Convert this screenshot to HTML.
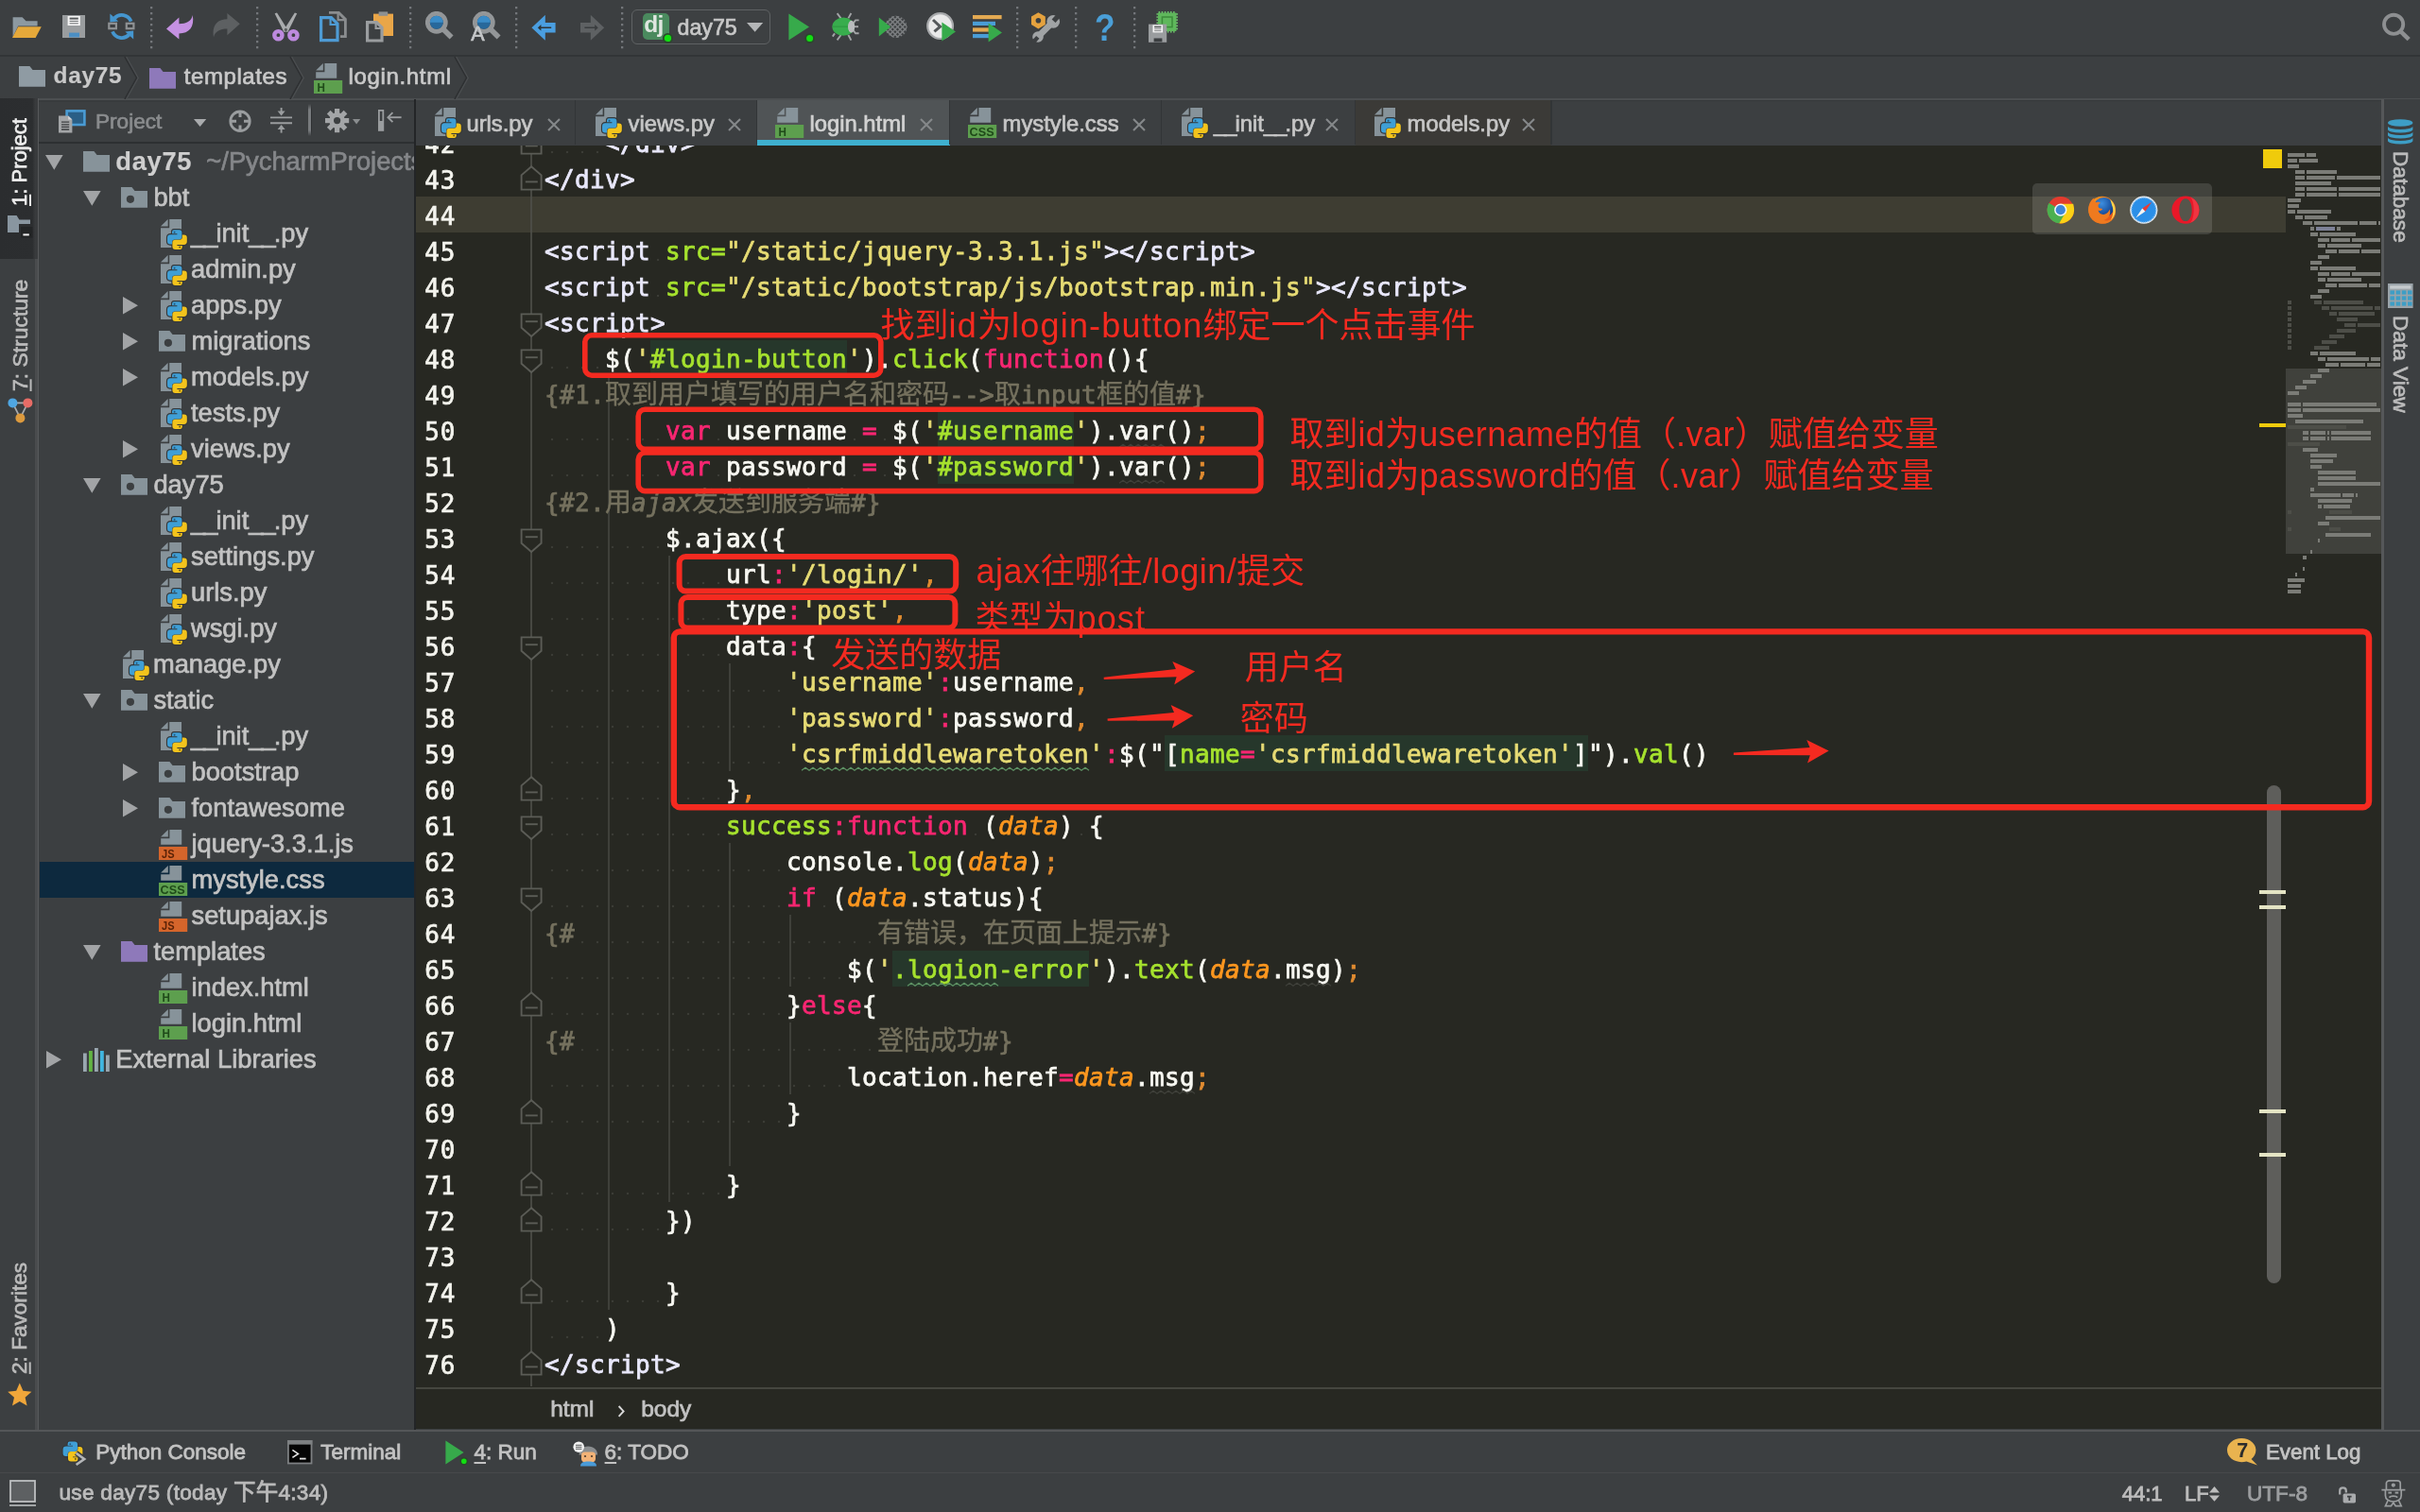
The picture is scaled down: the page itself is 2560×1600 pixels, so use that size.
<!DOCTYPE html>
<html lang="zh"><head><meta charset="utf-8"><title>day75 - login.html - PyCharm</title>
<style>
html,body{margin:0;padding:0}
body{width:2560px;height:1600px;overflow:hidden;position:relative;background:#3c3f41;
 font-family:"Liberation Sans","Noto Sans CJK SC",sans-serif;color:#bbb;-webkit-font-smoothing:antialiased;-webkit-text-stroke:.7px}
#wrap{position:absolute;left:0;top:0;width:2560px;height:1600px;overflow:hidden;will-change:transform}
#wrap>div,#wrap>svg{position:absolute}
#editor{position:absolute;left:440px;top:153px;width:2079px;height:1359px;background:#272822;overflow:hidden}
#editor div,#editor svg{position:absolute}
.ln{left:9.2px;width:40px;font-family:"DejaVu Sans Mono","Liberation Mono",monospace;font-size:26px;letter-spacing:1px;-webkit-text-stroke:.7px;
 line-height:38px;height:38px;color:#f4f4ee;white-space:pre}
.cl{left:136px;font-family:"DejaVu Sans Mono","Liberation Mono","Noto Sans CJK SC",monospace;font-size:26px;letter-spacing:.347px;
 line-height:38px;height:38px;color:#f8f8f2;white-space:pre;-webkit-text-stroke:.75px}
.cl span{position:relative}
.cj{font-family:"Noto Sans CJK SC","WenQuanYi Zen Hei",sans-serif;letter-spacing:0;font-size:28px;line-height:10px;-webkit-text-stroke:.35px}
b{-webkit-text-stroke:.15px}
.us{letter-spacing:-2px}
.bb{-webkit-text-stroke:.8px}
.al{letter-spacing:1.2px}
.t{color:#e9e8fb}.g{color:#a6e22e}.y{color:#e6db74}.p{color:#f92672}.o{color:#e08b30}.c{color:#75715e}
.d{color:#fd971f;font-style:italic}
.i{font-style:italic}
.ws{height:38px;background-image:radial-gradient(circle at 8px 29px,#3b3c36 0,#3b3c36 1px,rgba(59,60,54,0) 1.6px);background-size:16px 38px}
.bg{background:#26372b;height:38px}
.ig{width:2px;background:#3f403a}
.ann{font-family:"Liberation Sans","Noto Sans CJK SC",sans-serif;color:#f42a20;white-space:pre;-webkit-text-stroke:0}
.row{position:absolute;left:42px;width:396px;height:38px}
#tree div,#tree svg{position:absolute}
.tt{font-size:27.3px;line-height:38px;height:38px;color:#c3c3c3;white-space:pre;top:-0.5px}
</style></head><body><div id="wrap">

<div style="left:0;top:0;width:2560px;height:58px;background:#3c3f41"></div>
<div style="left:0;top:58px;width:2560px;height:1.5px;background:#323537"></div>
<svg style="position:absolute;left:13.4px;top:17.6px" width="32" height="24" viewBox="0 0 32 24" ><path d="M.6 21V.3H10.6L14.5 4.2H26.6V9.6H6.2Z" fill="#8d99a1"/><path d="M6.2 10.3H30.8L24.6 22H0Z" fill="#e6a93a"/></svg><svg style="position:absolute;left:65.6px;top:15.8px" width="25" height="25" viewBox="0 0 25 25" ><path d="M0 0H24V24H0Z" fill="#9a9d9f"/><rect x="5.6" y="1" width="13.2" height="10" fill="#f4f4f4"/><path d="M7.6 3.6H16.8" stroke="#55585a" stroke-width="2"/><path d="M7.6 6.4H16.8M7.6 8.8H16.8" stroke="#6a6d6f" stroke-width="1"/><rect x="7" y="18.6" width="11" height="4.8" fill="#4b8fc4"/></svg><svg style="position:absolute;left:113.6px;top:13.4px" width="30" height="30" viewBox="0 0 30 30" ><g transform="translate(29.6 0) scale(-1 1)"><g fill="none" stroke="#4596cf" stroke-width="3.8"><path d="M5 9.6A10.6 10.6 0 0 1 22.6 6.4"/><path d="M24.6 20.4A10.6 10.6 0 0 1 7 23.6"/></g><path d="M18.4 9.6L27.2 1.6V10.6Z" fill="#4596cf"/><path d="M11.2 20.4L2.4 28.4V19.4Z" fill="#4596cf"/></g><g fill="#3c3f41" stroke="#8f9294" stroke-width="2.2"><rect x="1.3" y="11.8" width="7.6" height="5.4"/><rect x="19.8" y="11.8" width="7.6" height="5.4"/></g></svg><svg style="position:absolute;left:159.1px;top:6.9px" width="3" height="46" viewBox="0 0 3 46" ><rect x="0" y="0" width="2.3" height="2.3" fill="#73767a"/><rect x="0" y="6" width="2.3" height="2.3" fill="#73767a"/><rect x="0" y="12" width="2.3" height="2.3" fill="#73767a"/><rect x="0" y="18" width="2.3" height="2.3" fill="#73767a"/><rect x="0" y="24" width="2.3" height="2.3" fill="#73767a"/><rect x="0" y="30" width="2.3" height="2.3" fill="#73767a"/><rect x="0" y="36" width="2.3" height="2.3" fill="#73767a"/><rect x="0" y="42" width="2.3" height="2.3" fill="#73767a"/></svg><svg style="position:absolute;left:176.2px;top:15.6px" width="30" height="27" viewBox="0 0 30 27" ><path d="M0 14.4L13.4 2.4V9.2C21 9.2 26.6 6.6 27.8 0C30 12.6 24 19.4 13.4 19.4V25.6Z" fill="#c591e2"/></svg><svg style="position:absolute;left:224.8px;top:14.4px" width="30" height="27" viewBox="0 0 30 27" ><g transform="rotate(180 14.4 12.8)"><path d="M0 14.4L13.4 2.4V9.2C21 9.2 26.6 6.6 27.8 0C30 12.6 24 19.4 13.4 19.4V25.6Z" fill="#5d6062"/></g></svg><svg style="position:absolute;left:270.7px;top:6.9px" width="3" height="46" viewBox="0 0 3 46" ><rect x="0" y="0" width="2.3" height="2.3" fill="#73767a"/><rect x="0" y="6" width="2.3" height="2.3" fill="#73767a"/><rect x="0" y="12" width="2.3" height="2.3" fill="#73767a"/><rect x="0" y="18" width="2.3" height="2.3" fill="#73767a"/><rect x="0" y="24" width="2.3" height="2.3" fill="#73767a"/><rect x="0" y="30" width="2.3" height="2.3" fill="#73767a"/><rect x="0" y="36" width="2.3" height="2.3" fill="#73767a"/><rect x="0" y="42" width="2.3" height="2.3" fill="#73767a"/></svg><svg style="position:absolute;left:287.6px;top:12.6px" width="30" height="31" viewBox="0 0 30 31" ><path d="M2.6 1.2L5 .6L17 19.6L12.4 21Z" fill="#a9abad"/><path d="M26.2 1.2L23.8 .6L11.8 19.6L16.4 21Z" fill="#a9abad"/><circle cx="14.4" cy="18.4" r="1.6" fill="#5a5d5f"/><circle cx="6.4" cy="24.2" r="4.1" fill="none" stroke="#bd8ade" stroke-width="4.4"/><circle cx="22.4" cy="24.2" r="4.1" fill="none" stroke="#bd8ade" stroke-width="4.4"/></svg><svg style="position:absolute;left:337.6px;top:11.8px" width="30" height="33" viewBox="0 0 30 33" ><path d="M10 1.4H20.4L27.4 8.4V26.6H22" fill="none" stroke="#8a8d8f" stroke-width="2.8"/><path d="M19.6 1.6V9.2H27" fill="none" stroke="#8a8d8f" stroke-width="2.2"/><path d="M1.6 6.6H12.4L19 13.2V30.6H1.6Z" fill="#3c3f41" stroke="#4e9bd4" stroke-width="3.2"/><path d="M11.6 7V14H18.6" fill="none" stroke="#4e9bd4" stroke-width="2.2"/></svg><svg style="position:absolute;left:387.4px;top:11.6px" width="30" height="33" viewBox="0 0 30 33" ><rect x="8" y="2.6" width="21" height="23.4" fill="#e9a648"/><rect x="13.6" y=".4" width="9.6" height="4.4" fill="#8d9092"/><path d="M1.6 11.6H11.4L17 17.2V31H1.6Z" fill="#3c3f41" stroke="#9a9d9f" stroke-width="3.2"/><path d="M10.6 12V18H16.6" fill="none" stroke="#9a9d9f" stroke-width="2.2"/></svg><svg style="position:absolute;left:433.1px;top:6.9px" width="3" height="46" viewBox="0 0 3 46" ><rect x="0" y="0" width="2.3" height="2.3" fill="#73767a"/><rect x="0" y="6" width="2.3" height="2.3" fill="#73767a"/><rect x="0" y="12" width="2.3" height="2.3" fill="#73767a"/><rect x="0" y="18" width="2.3" height="2.3" fill="#73767a"/><rect x="0" y="24" width="2.3" height="2.3" fill="#73767a"/><rect x="0" y="30" width="2.3" height="2.3" fill="#73767a"/><rect x="0" y="36" width="2.3" height="2.3" fill="#73767a"/><rect x="0" y="42" width="2.3" height="2.3" fill="#73767a"/></svg><svg style="position:absolute;left:450.0px;top:12.0px" width="31" height="31" viewBox="0 0 31 31" ><circle cx="11.8" cy="11.8" r="9.4" fill="none" stroke="#939698" stroke-width="5"/><circle cx="11.8" cy="11.8" r="7" fill="#27689b"/><path d="M4.8 11.8A7 7 0 0 1 18.8 11.8Z" fill="#3a8cc8"/><path d="M19 19L27.6 27.6" stroke="#939698" stroke-width="5.6" stroke-linecap="butt"/></svg><svg style="position:absolute;left:499.6px;top:12.0px" width="31" height="31" viewBox="0 0 31 31" ><circle cx="11.8" cy="11.8" r="9.4" fill="none" stroke="#939698" stroke-width="5"/><circle cx="11.8" cy="11.8" r="7" fill="#27689b"/><path d="M4.8 11.8A7 7 0 0 1 18.8 11.8Z" fill="#3a8cc8"/><path d="M19 19L27.6 27.6" stroke="#939698" stroke-width="5.6" stroke-linecap="butt"/></svg><div style="position:absolute;left:498.2px;top:25.2px;font:21.5px/22px 'Liberation Sans',sans-serif;color:#c4c6c8">A</div><svg style="position:absolute;left:545.1px;top:6.9px" width="3" height="46" viewBox="0 0 3 46" ><rect x="0" y="0" width="2.3" height="2.3" fill="#73767a"/><rect x="0" y="6" width="2.3" height="2.3" fill="#73767a"/><rect x="0" y="12" width="2.3" height="2.3" fill="#73767a"/><rect x="0" y="18" width="2.3" height="2.3" fill="#73767a"/><rect x="0" y="24" width="2.3" height="2.3" fill="#73767a"/><rect x="0" y="30" width="2.3" height="2.3" fill="#73767a"/><rect x="0" y="36" width="2.3" height="2.3" fill="#73767a"/><rect x="0" y="42" width="2.3" height="2.3" fill="#73767a"/></svg><svg style="position:absolute;left:562.2px;top:15.8px" width="28" height="27" viewBox="0 0 28 27" ><path d="M3.6 13.3L12.6 4.9V10.3H23.4V16.3H12.6V21.7Z" fill="#2f3436" stroke="#4a9ee0" stroke-width="4.4" stroke-linejoin="miter"/></svg><svg style="position:absolute;left:612.8px;top:15.8px" width="28" height="27" viewBox="0 0 28 27" ><g transform="translate(26.6 0) scale(-1 1)"><path d="M3.6 13.3L12.6 4.9V10.3H23.4V16.3H12.6V21.7Z" fill="#3a3d3f" stroke="#5e6163" stroke-width="4.4"/></g></svg><svg style="position:absolute;left:657.1px;top:6.9px" width="3" height="46" viewBox="0 0 3 46" ><rect x="0" y="0" width="2.3" height="2.3" fill="#73767a"/><rect x="0" y="6" width="2.3" height="2.3" fill="#73767a"/><rect x="0" y="12" width="2.3" height="2.3" fill="#73767a"/><rect x="0" y="18" width="2.3" height="2.3" fill="#73767a"/><rect x="0" y="24" width="2.3" height="2.3" fill="#73767a"/><rect x="0" y="30" width="2.3" height="2.3" fill="#73767a"/><rect x="0" y="36" width="2.3" height="2.3" fill="#73767a"/><rect x="0" y="42" width="2.3" height="2.3" fill="#73767a"/></svg><div style="position:absolute;left:667.6px;top:10px;width:145.6px;height:35.4px;border:1.8px solid #5f6264;border-radius:6px;background:#3d4042"></div><div style="position:absolute;left:679.6px;top:14px;width:28.4px;height:28px;border-radius:5px;background:#4a8a5e"></div><div style="position:absolute;left:681.2px;top:12.4px;font:bold 24.5px/28px 'Liberation Sans',sans-serif;color:#dfe6e0;letter-spacing:-.6px;-webkit-text-stroke:0">dj</div><svg style="position:absolute;left:700.4px;top:34.2px" width="13" height="13" viewBox="0 0 13 13" ><circle cx="6.4" cy="6.4" r="4.6" fill="#12df12" stroke="#2a4a2c" stroke-width="1.8"/></svg><svg style="position:absolute;left:790.0px;top:24.2px" width="18" height="10" viewBox="0 0 18 10" ><path d="M0 0H17.2L8.6 9.8Z" fill="#b4b6b8"/></svg><svg style="position:absolute;left:833.6px;top:14.0px" width="30" height="33" viewBox="0 0 30 33" ><path d="M.4 .4V28.4L22 14.4Z" fill="#37aa4b"/><circle cx="22.6" cy="26.6" r="4.4" fill="#12df12" stroke="#2a4a2c" stroke-width="1.8"/></svg><svg style="position:absolute;left:879.6px;top:12.6px" width="30" height="31" viewBox="0 0 30 31" ><g fill="none" stroke="#a3a5a7" stroke-width="1.9"><path d="M9.6 6.4L5.6 1.2"/><path d="M17.4 6.4L20.4 1"/><path d="M9.6 24L5.6 29.4"/><path d="M17.4 24L20.4 29.6"/><path d="M22.6 11.6L25 8.4H28.6"/><path d="M22.6 19L25 22.2H28.6"/><path d="M23 15.2H28"/><path d="M3 22.4L.8 25.6"/></g><ellipse cx="12.2" cy="15.2" rx="11.8" ry="9.6" fill="#38ad4d"/><path d="M.4 15.2H22" stroke="#2f9a42" stroke-width="1.2"/><ellipse cx="20.6" cy="15.2" rx="3.6" ry="6.4" fill="#b9bbbd"/></svg><svg style="position:absolute;left:929.2px;top:12.8px" width="31" height="31" viewBox="0 0 31 31" ><defs><clipPath id="cvc"><circle cx="18.8" cy="15.4" r="11.6"/></clipPath></defs><g clip-path="url(#cvc)" stroke="#7b7e80" stroke-width="1.5" fill="none"><path d="M-24.0 34L10.0 0"/><path d="M-24.0 -3L10.0 31"/><path d="M-18.8 34L15.2 0"/><path d="M-18.8 -3L15.2 31"/><path d="M-13.6 34L20.4 0"/><path d="M-13.6 -3L20.4 31"/><path d="M-8.399999999999999 34L25.6 0"/><path d="M-8.399999999999999 -3L25.6 31"/><path d="M-3.1999999999999993 34L30.8 0"/><path d="M-3.1999999999999993 -3L30.8 31"/><path d="M2.0 34L36.0 0"/><path d="M2.0 -3L36.0 31"/><path d="M7.200000000000003 34L41.2 0"/><path d="M7.200000000000003 -3L41.2 31"/><path d="M12.399999999999999 34L46.4 0"/><path d="M12.399999999999999 -3L46.4 31"/><path d="M17.6 34L51.6 0"/><path d="M17.6 -3L51.6 31"/><path d="M22.800000000000004 34L56.800000000000004 0"/><path d="M22.800000000000004 -3L56.800000000000004 31"/><path d="M28.0 34L62.0 0"/><path d="M28.0 -3L62.0 31"/><path d="M33.2 34L67.2 0"/><path d="M33.2 -3L67.2 31"/></g><path d="M.8 5.4V25.4L13.2 15.4Z" fill="#37aa4b"/></svg><svg style="position:absolute;left:979.8px;top:13.4px" width="32" height="31" viewBox="0 0 32 31" ><circle cx="14.6" cy="14.6" r="13.4" fill="#e9e9e9" stroke="#a7a9ab" stroke-width="2.2"/><path d="M7 8L14.6 15.2L8.4 20.4" fill="none" stroke="#55585a" stroke-width="3"/><path d="M16.4 10.6V30.4L31 20.4Z" fill="#37aa4b"/></svg><svg style="position:absolute;left:1029.4px;top:15.6px" width="32" height="29" viewBox="0 0 32 29" ><rect x="0" y="0" width="30.6" height="4.2" fill="#e3a952"/><rect x="0" y="6.8" width="24" height="4.2" fill="#4a9dd6"/><rect x="0" y="13.4" width="18" height="4.2" fill="#e3a952"/><rect x="0" y="20" width="18" height="4.2" fill="#4a9dd6"/><path d="M16.6 8.6V28.6L31 18.6Z" fill="#37aa4b"/></svg><svg style="position:absolute;left:1074.9px;top:6.9px" width="3" height="46" viewBox="0 0 3 46" ><rect x="0" y="0" width="2.3" height="2.3" fill="#73767a"/><rect x="0" y="6" width="2.3" height="2.3" fill="#73767a"/><rect x="0" y="12" width="2.3" height="2.3" fill="#73767a"/><rect x="0" y="18" width="2.3" height="2.3" fill="#73767a"/><rect x="0" y="24" width="2.3" height="2.3" fill="#73767a"/><rect x="0" y="30" width="2.3" height="2.3" fill="#73767a"/><rect x="0" y="36" width="2.3" height="2.3" fill="#73767a"/><rect x="0" y="42" width="2.3" height="2.3" fill="#73767a"/></svg><svg style="position:absolute;left:1090.0px;top:12.6px" width="32" height="32" viewBox="0 0 32 32" ><path d="M8.6 25.4L23.6 10.4" stroke="#a0a3a5" stroke-width="6.6"/><circle cx="24.2" cy="9.8" r="6.9" fill="#a0a3a5"/><rect x="-2.6" y="-9" width="5.2" height="9" fill="#3c3f41" transform="translate(24.6 9.2) rotate(42)"/><circle cx="8" cy="26" r="5.8" fill="#a0a3a5"/><rect x="-2.2" y="0" width="4.4" height="8" fill="#3c3f41" transform="translate(7.8 26.4) rotate(42)"/><path d="M8.4 .2L15.8 4.5V13.1L8.4 17.4L1 13.1V4.5Z" fill="#e5a23e"/><circle cx="8.4" cy="8.8" r="2.8" fill="#3c3f41"/></svg><svg style="position:absolute;left:1136.7px;top:6.9px" width="3" height="46" viewBox="0 0 3 46" ><rect x="0" y="0" width="2.3" height="2.3" fill="#73767a"/><rect x="0" y="6" width="2.3" height="2.3" fill="#73767a"/><rect x="0" y="12" width="2.3" height="2.3" fill="#73767a"/><rect x="0" y="18" width="2.3" height="2.3" fill="#73767a"/><rect x="0" y="24" width="2.3" height="2.3" fill="#73767a"/><rect x="0" y="30" width="2.3" height="2.3" fill="#73767a"/><rect x="0" y="36" width="2.3" height="2.3" fill="#73767a"/><rect x="0" y="42" width="2.3" height="2.3" fill="#73767a"/></svg><div style="position:absolute;left:1158.2px;top:7.4px;font:bold 41px/44px 'Liberation Sans',sans-serif;color:#4a9fd8;-webkit-text-stroke:0;transform:scaleX(.86);transform-origin:0 0">?</div><svg style="position:absolute;left:1198.9px;top:6.9px" width="3" height="46" viewBox="0 0 3 46" ><rect x="0" y="0" width="2.3" height="2.3" fill="#73767a"/><rect x="0" y="6" width="2.3" height="2.3" fill="#73767a"/><rect x="0" y="12" width="2.3" height="2.3" fill="#73767a"/><rect x="0" y="18" width="2.3" height="2.3" fill="#73767a"/><rect x="0" y="24" width="2.3" height="2.3" fill="#73767a"/><rect x="0" y="30" width="2.3" height="2.3" fill="#73767a"/><rect x="0" y="36" width="2.3" height="2.3" fill="#73767a"/><rect x="0" y="42" width="2.3" height="2.3" fill="#73767a"/></svg><svg style="position:absolute;left:1214.8px;top:11.6px" width="32" height="33" viewBox="0 0 32 33" ><rect x="10.6" y="0" width="1.5" height="22.6" fill="#6cbf6a"/><rect x="8.4" y="2.2" width="22.6" height="1.5" fill="#6cbf6a"/><rect x="13.7" y="0" width="1.5" height="22.6" fill="#6cbf6a"/><rect x="8.4" y="5.300000000000001" width="22.6" height="1.5" fill="#6cbf6a"/><rect x="16.8" y="0" width="1.5" height="22.6" fill="#6cbf6a"/><rect x="8.4" y="8.4" width="22.6" height="1.5" fill="#6cbf6a"/><rect x="19.9" y="0" width="1.5" height="22.6" fill="#6cbf6a"/><rect x="8.4" y="11.5" width="22.6" height="1.5" fill="#6cbf6a"/><rect x="23.0" y="0" width="1.5" height="22.6" fill="#6cbf6a"/><rect x="8.4" y="14.600000000000001" width="22.6" height="1.5" fill="#6cbf6a"/><rect x="26.1" y="0" width="1.5" height="22.6" fill="#6cbf6a"/><rect x="8.4" y="17.7" width="22.6" height="1.5" fill="#6cbf6a"/><rect x="10" y="1.6" width="19.4" height="19.4" fill="#5fb75c"/><rect x="14.4" y="6" width="10.6" height="10.6" fill="none" stroke="#3c8a3a" stroke-width="1.5"/><g transform="translate(0 13.6) scale(.8)"><path d="M0 0H24V24H0Z" fill="#9a9d9f"/><rect x="5.6" y="1" width="13.2" height="10" fill="#f4f4f4"/><path d="M7.6 3.6H16.8" stroke="#55585a" stroke-width="2"/><path d="M7.6 6.4H16.8M7.6 8.8H16.8" stroke="#6a6d6f" stroke-width="1"/><rect x="7" y="18.6" width="11" height="4.8" fill="#3c3f41"/></g></svg><svg style="position:absolute;left:2518.0px;top:12.0px" width="34" height="34" viewBox="0 0 34 34" ><circle cx="14.1" cy="13.8" r="10.1" fill="none" stroke="#8d8f91" stroke-width="3.9"/><path d="M21.4 21.2L30.2 29.6" stroke="#8d8f91" stroke-width="4.6"/></svg>
<div style="position:absolute;left:716.5px;top:14.2px;font-size:23.2px;line-height:30px;color:#c8c8c8;font-weight:normal;white-space:pre;">day75</div>
<div style="left:41px;top:104px;width:2519px;height:2px;background:#4b4e50"></div>
<svg style="position:absolute;left:20.0px;top:70.2px" width="29" height="23" viewBox="0 0 29 23" ><path d="M0 0H11.4L14.6 3.9H28V21.8H0Z" fill="#8f9ba3"/></svg><svg style="position:absolute;left:157.8px;top:71.6px" width="29" height="23" viewBox="0 0 29 23" ><path d="M0 0H11.4L14.6 3.9H28V21.8H0Z" fill="#8e79ba"/></svg><svg style="position:absolute;left:331.1px;top:65.6px" width="33" height="36" viewBox="0 0 33 36" ><g transform="translate(3.2 1)"><path d="M0 7.6L7.6 0V7.6Z" fill="#87939a"/><path d="M9.2 0H22V15.8H0V9.2H9.2Z" fill="#87939a"/></g><rect x="1" y="19" width="30.2" height="14" fill="#5d9f4e"/><text x="4.4" y="31.3" font-family="Liberation Sans, sans-serif" font-weight="bold" font-size="12.6" fill="#1f4a19" textLength="8.4" lengthAdjust="spacingAndGlyphs">H</text></svg><svg style="position:absolute;left:130.2px;top:59.5px" width="18" height="45" viewBox="0 0 18 45" ><path d="M2 0L14.6 22.4L2 45" fill="none" stroke="#2e3032" stroke-width="1.6"/><path d="M3.6 0L16.2 22.4L3.6 45" fill="none" stroke="#4b4e50" stroke-width="1.3"/></svg><svg style="position:absolute;left:304.6px;top:59.5px" width="18" height="45" viewBox="0 0 18 45" ><path d="M2 0L14.6 22.4L2 45" fill="none" stroke="#2e3032" stroke-width="1.6"/><path d="M3.6 0L16.2 22.4L3.6 45" fill="none" stroke="#4b4e50" stroke-width="1.3"/></svg><svg style="position:absolute;left:478.7px;top:59.5px" width="18" height="45" viewBox="0 0 18 45" ><path d="M2 0L14.6 22.4L2 45" fill="none" stroke="#2e3032" stroke-width="1.6"/><path d="M3.6 0L16.2 22.4L3.6 45" fill="none" stroke="#4b4e50" stroke-width="1.3"/></svg>
<div style="position:absolute;left:56.5px;top:64.4px;font-size:24.4px;line-height:32px;color:#c9c9c9;font-weight:bold;white-space:pre;letter-spacing:.75px;-webkit-text-stroke:.15px">day75</div>
<div style="position:absolute;left:194.7px;top:65.1px;font-size:24px;line-height:31px;color:#c9c9c9;font-weight:normal;white-space:pre;letter-spacing:.6px">templates</div>
<div style="position:absolute;left:368.6px;top:65.1px;font-size:24px;line-height:31px;color:#c9c9c9;font-weight:normal;white-space:pre;letter-spacing:.65px">login.html</div>
<div style="left:0;top:105px;width:37px;height:1408px;background:#3c3f41"></div>
<div style="left:0;top:103.5px;width:39.8px;height:170px;background:linear-gradient(90deg,#2b2d2f 0,#2c2e30 86%,#393b3d 93%,#393b3d 100%)"></div>
<div style="left:37px;top:274px;width:3px;height:1239px;background:#4a4c4e"></div>
<div style="left:39.8px;top:104px;width:1.5px;height:1409px;background:#57595b"></div>
<div style="left:21px;top:218.2px;width:0;height:0"><div style="position:absolute;left:0;top:0;transform-origin:0 0;transform:rotate(-90deg) translate(0,-50%);font-size:22.0px;line-height:22.0px;height:22.0px;white-space:pre;color:#ededed"><span style="text-decoration:underline;text-underline-offset:2.5px;text-decoration-thickness:1.8px">1</span>: Project</div></div>
<div style="left:21px;top:413.6px;width:0;height:0"><div style="position:absolute;left:0;top:0;transform-origin:0 0;transform:rotate(-90deg) translate(0,-50%);font-size:22.9px;line-height:22.9px;height:22.9px;white-space:pre;color:#bbbbbb"><span style="text-decoration:underline;text-underline-offset:2.5px;text-decoration-thickness:1.8px">7</span>: Structure</div></div>
<div style="left:21px;top:1453.6px;width:0;height:0"><div style="position:absolute;left:0;top:0;transform-origin:0 0;transform:rotate(-90deg) translate(0,-50%);font-size:22.6px;line-height:22.6px;height:22.6px;white-space:pre;color:#bbbbbb"><span style="text-decoration:underline;text-underline-offset:2.5px;text-decoration-thickness:1.8px">2</span>: Favorites</div></div>
<svg style="position:absolute;left:8.0px;top:228.0px" width="27" height="24" viewBox="0 0 27 24" ><path d="M0 0H9.6L12.4 4.4H24V9H12V18H0Z" fill="#8996a0"/><rect x="14" y="12" width="12.4" height="11.6" fill="#232526"/><rect x="16.4" y="19.4" width="6.4" height="2" fill="#f2f2f2"/></svg><svg style="position:absolute;left:8.0px;top:421.4px" width="27" height="27" viewBox="0 0 27 27" ><g stroke="#a9abad" stroke-width="1.8"><path d="M5.4 5.4H21.4"/><path d="M5.4 5.4L13.4 21.4"/><path d="M21.4 5.4L13.4 21.4"/></g><circle cx="5.4" cy="5.4" r="5" fill="#4fa6e2"/><circle cx="21.4" cy="5.4" r="5" fill="#e76c66"/><circle cx="13.4" cy="21.4" r="5" fill="#dc9a3e"/></svg><svg style="position:absolute;left:7.6px;top:1462.6px" width="26" height="26" viewBox="0 0 26 26" ><path d="M12.8 .4L16.4 8.8L25.4 9.7L18.6 15.7L20.6 24.6L12.8 20L5 24.6L7 15.7L.2 9.7L9.2 8.8Z" fill="#f0a63a"/></svg>
<div id="tree" style="left:41px;top:105px;width:397px;height:1408px;background:#3c3f41;overflow:hidden">
<div style="left:0;top:0;width:397px;height:1px;background:#4d5052"></div><div style="left:0;top:1px;width:397px;height:2.2px;background:#383b3d"></div>
<div style="left:0;top:45px;width:397px;height:2.2px;background:#2d3032"></div>
<svg style="position:absolute;left:20.8px;top:10.6px" width="29" height="25" viewBox="0 0 29 25" ><rect x="8.6" y="1.4" width="18.8" height="14.6" fill="#2a5f86" stroke="#4a9cd4" stroke-width="2.6"/><path d="M0 6.4H10L14.4 10.8V24.4H0Z" fill="#a3a5a7"/><path d="M10.2 6.4V10.6H14.4Z" fill="#d3d5d7"/><path d="M3 13.2H11.2M3 15.8H11.2M3 18.4H11.2M3 21H11.2" stroke="#3c3f41" stroke-width="1.3"/></svg><svg style="position:absolute;left:164.2px;top:20.8px" width="14" height="9" viewBox="0 0 14 9" ><path d="M0 0H13.2L6.6 8Z" fill="#a9abad"/></svg><svg style="position:absolute;left:201.4px;top:10.6px" width="25" height="25" viewBox="0 0 25 25" ><circle cx="12" cy="12.2" r="10.2" fill="none" stroke="#9a9d9f" stroke-width="2.8"/><path d="M12 1V8M12 16.4V23.4M1 12.2H8M16 12.2H23" stroke="#9a9d9f" stroke-width="3"/></svg><svg style="position:absolute;left:244.6px;top:9.4px" width="24" height="27" viewBox="0 0 24 27" ><g stroke="#9a9d9f" stroke-width="1.9" fill="none"><path d="M0 10.4H23M0 16.2H23"/><path d="M11.6 0V7"/><path d="M11.6 26.6V19.6"/></g><path d="M7.6 3.6H15.6L11.6 8.6Z" fill="#9a9d9f"/><path d="M7.6 23H15.6L11.6 18Z" fill="#9a9d9f"/></svg><div style="left:285.4px;top:5px;width:2.6px;height:34px;background:linear-gradient(180deg,rgba(120,123,126,0),#787b7e 18%,#787b7e 82%,rgba(120,123,126,0))"></div><div style="left:288px;top:5px;width:1.4px;height:34px;background:linear-gradient(180deg,rgba(46,48,50,0),#2e3032 18%,#2e3032 82%,rgba(46,48,50,0))"></div><svg style="position:absolute;left:303.0px;top:10.4px" width="26" height="26" viewBox="0 0 26 26" ><g transform="translate(12.6 12.6)" fill="#a3a5a7"><rect x="-2.6" y="-12.6" width="5.2" height="6" transform="rotate(0)"/><rect x="-2.6" y="-12.6" width="5.2" height="6" transform="rotate(45)"/><rect x="-2.6" y="-12.6" width="5.2" height="6" transform="rotate(90)"/><rect x="-2.6" y="-12.6" width="5.2" height="6" transform="rotate(135)"/><rect x="-2.6" y="-12.6" width="5.2" height="6" transform="rotate(180)"/><rect x="-2.6" y="-12.6" width="5.2" height="6" transform="rotate(225)"/><rect x="-2.6" y="-12.6" width="5.2" height="6" transform="rotate(270)"/><rect x="-2.6" y="-12.6" width="5.2" height="6" transform="rotate(315)"/><circle r="8.4"/><circle r="3.6" fill="#3c3f41"/></g></svg><svg style="position:absolute;left:331.8px;top:21.0px" width="9" height="7" viewBox="0 0 9 7" ><path d="M0 0H8.2L4.1 5.6Z" fill="#8a8d8f"/></svg><svg style="position:absolute;left:358.8px;top:10.8px" width="26" height="24" viewBox="0 0 26 24" ><rect x=".9" y=".9" width="4.4" height="21" fill="none" stroke="#9a9d9f" stroke-width="1.8"/><rect x=".9" y="12" width="4.4" height="10" fill="#9a9d9f"/><path d="M10.6 8.2H24.6" stroke="#9a9d9f" stroke-width="1.9"/><path d="M15.4 3.2L10.4 8.2L15.4 13.2" fill="none" stroke="#9a9d9f" stroke-width="1.9"/></svg>
<div style="position:absolute;left:60.0px;top:9.3px;font-size:22.6px;line-height:29px;color:#8a8c8e;font-weight:normal;white-space:pre;">Project</div>
<div class="row" style="left:1px;top:47px;">
<svg style="left:5.6px;top:12px" width="19" height="16" viewBox="0 0 19 16"><path d="M0 0H18.6L9.3 15.8Z" fill="#a2a4a6"/></svg>
<svg style="position:absolute;left:46.0px;top:8.2px" width="29" height="23" viewBox="0 0 29 23" ><path d="M0 0H11.4L14.6 3.9H28V21.8H0Z" fill="#87939a"/></svg>
<div class="tt" style="left:80.3px"><b style="color:#cfcfcf;letter-spacing:.7px">day75</b><span style="color:#85878a">&nbsp; ~/PycharmProjects/day75</span></div>
</div>
<div class="row" style="left:1px;top:85px;">
<svg style="left:46.2px;top:12px" width="19" height="16" viewBox="0 0 19 16"><path d="M0 0H18.6L9.3 15.8Z" fill="#a2a4a6"/></svg>
<svg style="position:absolute;left:86.0px;top:8.2px" width="29" height="23" viewBox="0 0 29 23" ><path d="M0 0H11.4L14.6 3.9H28V21.8H0Z" fill="#87939a"/><circle cx="9.9" cy="12.8" r="4.1" fill="#3c3f41"/></svg>
<div class="tt" style="left:120.4px">bbt</div>
</div>
<div class="row" style="left:1px;top:123px;">
<svg style="position:absolute;left:127.1px;top:3.0px" width="32" height="36" viewBox="0 0 32 36" ><g transform="translate(1 1)"><path d="M0 7.6L7.6 0V7.6Z" fill="#87939a"/><path d="M9.2 0H22V30H0V9.2H9.2Z" fill="#87939a"/></g><g transform="translate(7.4 11.6) scale(1.0)"><g stroke="#35383a" stroke-width="2.2" stroke-linejoin="round"><path d="M7.6 .6H13Q16 .6 16 3.6V8Q16 10.9 13 10.9H8.6Q5.6 10.9 5.6 13.9V16H3.6Q.6 16 .6 13V9Q.6 5.6 4 5.6H11V4.7H5.6V3Q5.6 .6 7.6 .6Z"/><path d="M7.6 .6H13Q16 .6 16 3.6V8Q16 10.9 13 10.9H8.6Q5.6 10.9 5.6 13.9V16H3.6Q.6 16 .6 13V9Q.6 5.6 4 5.6H11V4.7H5.6V3Q5.6 .6 7.6 .6Z" transform="rotate(180 11 11)"/></g><path d="M7.6 .6H13Q16 .6 16 3.6V8Q16 10.9 13 10.9H8.6Q5.6 10.9 5.6 13.9V16H3.6Q.6 16 .6 13V9Q.6 5.6 4 5.6H11V4.7H5.6V3Q5.6 .6 7.6 .6Z" fill="#3f9fd6"/><path d="M7.6 .6H13Q16 .6 16 3.6V8Q16 10.9 13 10.9H8.6Q5.6 10.9 5.6 13.9V16H3.6Q.6 16 .6 13V9Q.6 5.6 4 5.6H11V4.7H5.6V3Q5.6 .6 7.6 .6Z" transform="rotate(180 11 11)" fill="#f3c31c"/><circle cx="8.2" cy="3.1" r=".95" fill="#23567a"/><circle cx="13.8" cy="18.9" r=".95" fill="#6e560c"/></g></svg>
<div class="tt" style="left:160.0px"><span class="us">__</span>init<span class="us">__</span>.py</div>
</div>
<div class="row" style="left:1px;top:161px;">
<svg style="position:absolute;left:127.1px;top:3.0px" width="32" height="36" viewBox="0 0 32 36" ><g transform="translate(1 1)"><path d="M0 7.6L7.6 0V7.6Z" fill="#87939a"/><path d="M9.2 0H22V30H0V9.2H9.2Z" fill="#87939a"/></g><g transform="translate(7.4 11.6) scale(1.0)"><g stroke="#35383a" stroke-width="2.2" stroke-linejoin="round"><path d="M7.6 .6H13Q16 .6 16 3.6V8Q16 10.9 13 10.9H8.6Q5.6 10.9 5.6 13.9V16H3.6Q.6 16 .6 13V9Q.6 5.6 4 5.6H11V4.7H5.6V3Q5.6 .6 7.6 .6Z"/><path d="M7.6 .6H13Q16 .6 16 3.6V8Q16 10.9 13 10.9H8.6Q5.6 10.9 5.6 13.9V16H3.6Q.6 16 .6 13V9Q.6 5.6 4 5.6H11V4.7H5.6V3Q5.6 .6 7.6 .6Z" transform="rotate(180 11 11)"/></g><path d="M7.6 .6H13Q16 .6 16 3.6V8Q16 10.9 13 10.9H8.6Q5.6 10.9 5.6 13.9V16H3.6Q.6 16 .6 13V9Q.6 5.6 4 5.6H11V4.7H5.6V3Q5.6 .6 7.6 .6Z" fill="#3f9fd6"/><path d="M7.6 .6H13Q16 .6 16 3.6V8Q16 10.9 13 10.9H8.6Q5.6 10.9 5.6 13.9V16H3.6Q.6 16 .6 13V9Q.6 5.6 4 5.6H11V4.7H5.6V3Q5.6 .6 7.6 .6Z" transform="rotate(180 11 11)" fill="#f3c31c"/><circle cx="8.2" cy="3.1" r=".95" fill="#23567a"/><circle cx="13.8" cy="18.9" r=".95" fill="#6e560c"/></g></svg>
<div class="tt" style="left:160.0px">admin.py</div>
</div>
<div class="row" style="left:1px;top:199px;">
<svg style="left:87.8px;top:9.6px" width="17" height="19" viewBox="0 0 17 19"><path d="M0 0V18.6L16 9.3Z" fill="#a2a4a6"/></svg>
<svg style="position:absolute;left:127.1px;top:3.0px" width="32" height="36" viewBox="0 0 32 36" ><g transform="translate(1 1)"><path d="M0 7.6L7.6 0V7.6Z" fill="#87939a"/><path d="M9.2 0H22V30H0V9.2H9.2Z" fill="#87939a"/></g><g transform="translate(7.4 11.6) scale(1.0)"><g stroke="#35383a" stroke-width="2.2" stroke-linejoin="round"><path d="M7.6 .6H13Q16 .6 16 3.6V8Q16 10.9 13 10.9H8.6Q5.6 10.9 5.6 13.9V16H3.6Q.6 16 .6 13V9Q.6 5.6 4 5.6H11V4.7H5.6V3Q5.6 .6 7.6 .6Z"/><path d="M7.6 .6H13Q16 .6 16 3.6V8Q16 10.9 13 10.9H8.6Q5.6 10.9 5.6 13.9V16H3.6Q.6 16 .6 13V9Q.6 5.6 4 5.6H11V4.7H5.6V3Q5.6 .6 7.6 .6Z" transform="rotate(180 11 11)"/></g><path d="M7.6 .6H13Q16 .6 16 3.6V8Q16 10.9 13 10.9H8.6Q5.6 10.9 5.6 13.9V16H3.6Q.6 16 .6 13V9Q.6 5.6 4 5.6H11V4.7H5.6V3Q5.6 .6 7.6 .6Z" fill="#3f9fd6"/><path d="M7.6 .6H13Q16 .6 16 3.6V8Q16 10.9 13 10.9H8.6Q5.6 10.9 5.6 13.9V16H3.6Q.6 16 .6 13V9Q.6 5.6 4 5.6H11V4.7H5.6V3Q5.6 .6 7.6 .6Z" transform="rotate(180 11 11)" fill="#f3c31c"/><circle cx="8.2" cy="3.1" r=".95" fill="#23567a"/><circle cx="13.8" cy="18.9" r=".95" fill="#6e560c"/></g></svg>
<div class="tt" style="left:160.0px">apps.py</div>
</div>
<div class="row" style="left:1px;top:237px;">
<svg style="left:87.8px;top:9.6px" width="17" height="19" viewBox="0 0 17 19"><path d="M0 0V18.6L16 9.3Z" fill="#a2a4a6"/></svg>
<svg style="position:absolute;left:126.0px;top:8.2px" width="29" height="23" viewBox="0 0 29 23" ><path d="M0 0H11.4L14.6 3.9H28V21.8H0Z" fill="#87939a"/><circle cx="9.9" cy="12.8" r="4.1" fill="#3c3f41"/></svg>
<div class="tt" style="left:160.5px">migrations</div>
</div>
<div class="row" style="left:1px;top:275px;">
<svg style="left:87.8px;top:9.6px" width="17" height="19" viewBox="0 0 17 19"><path d="M0 0V18.6L16 9.3Z" fill="#a2a4a6"/></svg>
<svg style="position:absolute;left:127.1px;top:3.0px" width="32" height="36" viewBox="0 0 32 36" ><g transform="translate(1 1)"><path d="M0 7.6L7.6 0V7.6Z" fill="#87939a"/><path d="M9.2 0H22V30H0V9.2H9.2Z" fill="#87939a"/></g><g transform="translate(7.4 11.6) scale(1.0)"><g stroke="#35383a" stroke-width="2.2" stroke-linejoin="round"><path d="M7.6 .6H13Q16 .6 16 3.6V8Q16 10.9 13 10.9H8.6Q5.6 10.9 5.6 13.9V16H3.6Q.6 16 .6 13V9Q.6 5.6 4 5.6H11V4.7H5.6V3Q5.6 .6 7.6 .6Z"/><path d="M7.6 .6H13Q16 .6 16 3.6V8Q16 10.9 13 10.9H8.6Q5.6 10.9 5.6 13.9V16H3.6Q.6 16 .6 13V9Q.6 5.6 4 5.6H11V4.7H5.6V3Q5.6 .6 7.6 .6Z" transform="rotate(180 11 11)"/></g><path d="M7.6 .6H13Q16 .6 16 3.6V8Q16 10.9 13 10.9H8.6Q5.6 10.9 5.6 13.9V16H3.6Q.6 16 .6 13V9Q.6 5.6 4 5.6H11V4.7H5.6V3Q5.6 .6 7.6 .6Z" fill="#3f9fd6"/><path d="M7.6 .6H13Q16 .6 16 3.6V8Q16 10.9 13 10.9H8.6Q5.6 10.9 5.6 13.9V16H3.6Q.6 16 .6 13V9Q.6 5.6 4 5.6H11V4.7H5.6V3Q5.6 .6 7.6 .6Z" transform="rotate(180 11 11)" fill="#f3c31c"/><circle cx="8.2" cy="3.1" r=".95" fill="#23567a"/><circle cx="13.8" cy="18.9" r=".95" fill="#6e560c"/></g></svg>
<div class="tt" style="left:160.0px">models.py</div>
</div>
<div class="row" style="left:1px;top:313px;">
<svg style="position:absolute;left:127.1px;top:3.0px" width="32" height="36" viewBox="0 0 32 36" ><g transform="translate(1 1)"><path d="M0 7.6L7.6 0V7.6Z" fill="#87939a"/><path d="M9.2 0H22V30H0V9.2H9.2Z" fill="#87939a"/></g><g transform="translate(7.4 11.6) scale(1.0)"><g stroke="#35383a" stroke-width="2.2" stroke-linejoin="round"><path d="M7.6 .6H13Q16 .6 16 3.6V8Q16 10.9 13 10.9H8.6Q5.6 10.9 5.6 13.9V16H3.6Q.6 16 .6 13V9Q.6 5.6 4 5.6H11V4.7H5.6V3Q5.6 .6 7.6 .6Z"/><path d="M7.6 .6H13Q16 .6 16 3.6V8Q16 10.9 13 10.9H8.6Q5.6 10.9 5.6 13.9V16H3.6Q.6 16 .6 13V9Q.6 5.6 4 5.6H11V4.7H5.6V3Q5.6 .6 7.6 .6Z" transform="rotate(180 11 11)"/></g><path d="M7.6 .6H13Q16 .6 16 3.6V8Q16 10.9 13 10.9H8.6Q5.6 10.9 5.6 13.9V16H3.6Q.6 16 .6 13V9Q.6 5.6 4 5.6H11V4.7H5.6V3Q5.6 .6 7.6 .6Z" fill="#3f9fd6"/><path d="M7.6 .6H13Q16 .6 16 3.6V8Q16 10.9 13 10.9H8.6Q5.6 10.9 5.6 13.9V16H3.6Q.6 16 .6 13V9Q.6 5.6 4 5.6H11V4.7H5.6V3Q5.6 .6 7.6 .6Z" transform="rotate(180 11 11)" fill="#f3c31c"/><circle cx="8.2" cy="3.1" r=".95" fill="#23567a"/><circle cx="13.8" cy="18.9" r=".95" fill="#6e560c"/></g></svg>
<div class="tt" style="left:160.0px">tests.py</div>
</div>
<div class="row" style="left:1px;top:351px;">
<svg style="left:87.8px;top:9.6px" width="17" height="19" viewBox="0 0 17 19"><path d="M0 0V18.6L16 9.3Z" fill="#a2a4a6"/></svg>
<svg style="position:absolute;left:127.1px;top:3.0px" width="32" height="36" viewBox="0 0 32 36" ><g transform="translate(1 1)"><path d="M0 7.6L7.6 0V7.6Z" fill="#87939a"/><path d="M9.2 0H22V30H0V9.2H9.2Z" fill="#87939a"/></g><g transform="translate(7.4 11.6) scale(1.0)"><g stroke="#35383a" stroke-width="2.2" stroke-linejoin="round"><path d="M7.6 .6H13Q16 .6 16 3.6V8Q16 10.9 13 10.9H8.6Q5.6 10.9 5.6 13.9V16H3.6Q.6 16 .6 13V9Q.6 5.6 4 5.6H11V4.7H5.6V3Q5.6 .6 7.6 .6Z"/><path d="M7.6 .6H13Q16 .6 16 3.6V8Q16 10.9 13 10.9H8.6Q5.6 10.9 5.6 13.9V16H3.6Q.6 16 .6 13V9Q.6 5.6 4 5.6H11V4.7H5.6V3Q5.6 .6 7.6 .6Z" transform="rotate(180 11 11)"/></g><path d="M7.6 .6H13Q16 .6 16 3.6V8Q16 10.9 13 10.9H8.6Q5.6 10.9 5.6 13.9V16H3.6Q.6 16 .6 13V9Q.6 5.6 4 5.6H11V4.7H5.6V3Q5.6 .6 7.6 .6Z" fill="#3f9fd6"/><path d="M7.6 .6H13Q16 .6 16 3.6V8Q16 10.9 13 10.9H8.6Q5.6 10.9 5.6 13.9V16H3.6Q.6 16 .6 13V9Q.6 5.6 4 5.6H11V4.7H5.6V3Q5.6 .6 7.6 .6Z" transform="rotate(180 11 11)" fill="#f3c31c"/><circle cx="8.2" cy="3.1" r=".95" fill="#23567a"/><circle cx="13.8" cy="18.9" r=".95" fill="#6e560c"/></g></svg>
<div class="tt" style="left:160.0px">views.py</div>
</div>
<div class="row" style="left:1px;top:389px;">
<svg style="left:46.2px;top:12px" width="19" height="16" viewBox="0 0 19 16"><path d="M0 0H18.6L9.3 15.8Z" fill="#a2a4a6"/></svg>
<svg style="position:absolute;left:86.0px;top:8.2px" width="29" height="23" viewBox="0 0 29 23" ><path d="M0 0H11.4L14.6 3.9H28V21.8H0Z" fill="#87939a"/><circle cx="9.9" cy="12.8" r="4.1" fill="#3c3f41"/></svg>
<div class="tt" style="left:120.4px">day75</div>
</div>
<div class="row" style="left:1px;top:427px;">
<svg style="position:absolute;left:127.1px;top:3.0px" width="32" height="36" viewBox="0 0 32 36" ><g transform="translate(1 1)"><path d="M0 7.6L7.6 0V7.6Z" fill="#87939a"/><path d="M9.2 0H22V30H0V9.2H9.2Z" fill="#87939a"/></g><g transform="translate(7.4 11.6) scale(1.0)"><g stroke="#35383a" stroke-width="2.2" stroke-linejoin="round"><path d="M7.6 .6H13Q16 .6 16 3.6V8Q16 10.9 13 10.9H8.6Q5.6 10.9 5.6 13.9V16H3.6Q.6 16 .6 13V9Q.6 5.6 4 5.6H11V4.7H5.6V3Q5.6 .6 7.6 .6Z"/><path d="M7.6 .6H13Q16 .6 16 3.6V8Q16 10.9 13 10.9H8.6Q5.6 10.9 5.6 13.9V16H3.6Q.6 16 .6 13V9Q.6 5.6 4 5.6H11V4.7H5.6V3Q5.6 .6 7.6 .6Z" transform="rotate(180 11 11)"/></g><path d="M7.6 .6H13Q16 .6 16 3.6V8Q16 10.9 13 10.9H8.6Q5.6 10.9 5.6 13.9V16H3.6Q.6 16 .6 13V9Q.6 5.6 4 5.6H11V4.7H5.6V3Q5.6 .6 7.6 .6Z" fill="#3f9fd6"/><path d="M7.6 .6H13Q16 .6 16 3.6V8Q16 10.9 13 10.9H8.6Q5.6 10.9 5.6 13.9V16H3.6Q.6 16 .6 13V9Q.6 5.6 4 5.6H11V4.7H5.6V3Q5.6 .6 7.6 .6Z" transform="rotate(180 11 11)" fill="#f3c31c"/><circle cx="8.2" cy="3.1" r=".95" fill="#23567a"/><circle cx="13.8" cy="18.9" r=".95" fill="#6e560c"/></g></svg>
<div class="tt" style="left:160.0px"><span class="us">__</span>init<span class="us">__</span>.py</div>
</div>
<div class="row" style="left:1px;top:465px;">
<svg style="position:absolute;left:127.1px;top:3.0px" width="32" height="36" viewBox="0 0 32 36" ><g transform="translate(1 1)"><path d="M0 7.6L7.6 0V7.6Z" fill="#87939a"/><path d="M9.2 0H22V30H0V9.2H9.2Z" fill="#87939a"/></g><g transform="translate(7.4 11.6) scale(1.0)"><g stroke="#35383a" stroke-width="2.2" stroke-linejoin="round"><path d="M7.6 .6H13Q16 .6 16 3.6V8Q16 10.9 13 10.9H8.6Q5.6 10.9 5.6 13.9V16H3.6Q.6 16 .6 13V9Q.6 5.6 4 5.6H11V4.7H5.6V3Q5.6 .6 7.6 .6Z"/><path d="M7.6 .6H13Q16 .6 16 3.6V8Q16 10.9 13 10.9H8.6Q5.6 10.9 5.6 13.9V16H3.6Q.6 16 .6 13V9Q.6 5.6 4 5.6H11V4.7H5.6V3Q5.6 .6 7.6 .6Z" transform="rotate(180 11 11)"/></g><path d="M7.6 .6H13Q16 .6 16 3.6V8Q16 10.9 13 10.9H8.6Q5.6 10.9 5.6 13.9V16H3.6Q.6 16 .6 13V9Q.6 5.6 4 5.6H11V4.7H5.6V3Q5.6 .6 7.6 .6Z" fill="#3f9fd6"/><path d="M7.6 .6H13Q16 .6 16 3.6V8Q16 10.9 13 10.9H8.6Q5.6 10.9 5.6 13.9V16H3.6Q.6 16 .6 13V9Q.6 5.6 4 5.6H11V4.7H5.6V3Q5.6 .6 7.6 .6Z" transform="rotate(180 11 11)" fill="#f3c31c"/><circle cx="8.2" cy="3.1" r=".95" fill="#23567a"/><circle cx="13.8" cy="18.9" r=".95" fill="#6e560c"/></g></svg>
<div class="tt" style="left:160.0px">settings.py</div>
</div>
<div class="row" style="left:1px;top:503px;">
<svg style="position:absolute;left:127.1px;top:3.0px" width="32" height="36" viewBox="0 0 32 36" ><g transform="translate(1 1)"><path d="M0 7.6L7.6 0V7.6Z" fill="#87939a"/><path d="M9.2 0H22V30H0V9.2H9.2Z" fill="#87939a"/></g><g transform="translate(7.4 11.6) scale(1.0)"><g stroke="#35383a" stroke-width="2.2" stroke-linejoin="round"><path d="M7.6 .6H13Q16 .6 16 3.6V8Q16 10.9 13 10.9H8.6Q5.6 10.9 5.6 13.9V16H3.6Q.6 16 .6 13V9Q.6 5.6 4 5.6H11V4.7H5.6V3Q5.6 .6 7.6 .6Z"/><path d="M7.6 .6H13Q16 .6 16 3.6V8Q16 10.9 13 10.9H8.6Q5.6 10.9 5.6 13.9V16H3.6Q.6 16 .6 13V9Q.6 5.6 4 5.6H11V4.7H5.6V3Q5.6 .6 7.6 .6Z" transform="rotate(180 11 11)"/></g><path d="M7.6 .6H13Q16 .6 16 3.6V8Q16 10.9 13 10.9H8.6Q5.6 10.9 5.6 13.9V16H3.6Q.6 16 .6 13V9Q.6 5.6 4 5.6H11V4.7H5.6V3Q5.6 .6 7.6 .6Z" fill="#3f9fd6"/><path d="M7.6 .6H13Q16 .6 16 3.6V8Q16 10.9 13 10.9H8.6Q5.6 10.9 5.6 13.9V16H3.6Q.6 16 .6 13V9Q.6 5.6 4 5.6H11V4.7H5.6V3Q5.6 .6 7.6 .6Z" transform="rotate(180 11 11)" fill="#f3c31c"/><circle cx="8.2" cy="3.1" r=".95" fill="#23567a"/><circle cx="13.8" cy="18.9" r=".95" fill="#6e560c"/></g></svg>
<div class="tt" style="left:160.0px">urls.py</div>
</div>
<div class="row" style="left:1px;top:541px;">
<svg style="position:absolute;left:127.1px;top:3.0px" width="32" height="36" viewBox="0 0 32 36" ><g transform="translate(1 1)"><path d="M0 7.6L7.6 0V7.6Z" fill="#87939a"/><path d="M9.2 0H22V30H0V9.2H9.2Z" fill="#87939a"/></g><g transform="translate(7.4 11.6) scale(1.0)"><g stroke="#35383a" stroke-width="2.2" stroke-linejoin="round"><path d="M7.6 .6H13Q16 .6 16 3.6V8Q16 10.9 13 10.9H8.6Q5.6 10.9 5.6 13.9V16H3.6Q.6 16 .6 13V9Q.6 5.6 4 5.6H11V4.7H5.6V3Q5.6 .6 7.6 .6Z"/><path d="M7.6 .6H13Q16 .6 16 3.6V8Q16 10.9 13 10.9H8.6Q5.6 10.9 5.6 13.9V16H3.6Q.6 16 .6 13V9Q.6 5.6 4 5.6H11V4.7H5.6V3Q5.6 .6 7.6 .6Z" transform="rotate(180 11 11)"/></g><path d="M7.6 .6H13Q16 .6 16 3.6V8Q16 10.9 13 10.9H8.6Q5.6 10.9 5.6 13.9V16H3.6Q.6 16 .6 13V9Q.6 5.6 4 5.6H11V4.7H5.6V3Q5.6 .6 7.6 .6Z" fill="#3f9fd6"/><path d="M7.6 .6H13Q16 .6 16 3.6V8Q16 10.9 13 10.9H8.6Q5.6 10.9 5.6 13.9V16H3.6Q.6 16 .6 13V9Q.6 5.6 4 5.6H11V4.7H5.6V3Q5.6 .6 7.6 .6Z" transform="rotate(180 11 11)" fill="#f3c31c"/><circle cx="8.2" cy="3.1" r=".95" fill="#23567a"/><circle cx="13.8" cy="18.9" r=".95" fill="#6e560c"/></g></svg>
<div class="tt" style="left:160.0px">wsgi.py</div>
</div>
<div class="row" style="left:1px;top:579px;">
<svg style="position:absolute;left:87.1px;top:3.0px" width="32" height="36" viewBox="0 0 32 36" ><g transform="translate(1 1)"><path d="M0 7.6L7.6 0V7.6Z" fill="#87939a"/><path d="M9.2 0H22V30H0V9.2H9.2Z" fill="#87939a"/></g><g transform="translate(7.4 11.6) scale(1.0)"><g stroke="#35383a" stroke-width="2.2" stroke-linejoin="round"><path d="M7.6 .6H13Q16 .6 16 3.6V8Q16 10.9 13 10.9H8.6Q5.6 10.9 5.6 13.9V16H3.6Q.6 16 .6 13V9Q.6 5.6 4 5.6H11V4.7H5.6V3Q5.6 .6 7.6 .6Z"/><path d="M7.6 .6H13Q16 .6 16 3.6V8Q16 10.9 13 10.9H8.6Q5.6 10.9 5.6 13.9V16H3.6Q.6 16 .6 13V9Q.6 5.6 4 5.6H11V4.7H5.6V3Q5.6 .6 7.6 .6Z" transform="rotate(180 11 11)"/></g><path d="M7.6 .6H13Q16 .6 16 3.6V8Q16 10.9 13 10.9H8.6Q5.6 10.9 5.6 13.9V16H3.6Q.6 16 .6 13V9Q.6 5.6 4 5.6H11V4.7H5.6V3Q5.6 .6 7.6 .6Z" fill="#3f9fd6"/><path d="M7.6 .6H13Q16 .6 16 3.6V8Q16 10.9 13 10.9H8.6Q5.6 10.9 5.6 13.9V16H3.6Q.6 16 .6 13V9Q.6 5.6 4 5.6H11V4.7H5.6V3Q5.6 .6 7.6 .6Z" transform="rotate(180 11 11)" fill="#f3c31c"/><circle cx="8.2" cy="3.1" r=".95" fill="#23567a"/><circle cx="13.8" cy="18.9" r=".95" fill="#6e560c"/></g></svg>
<div class="tt" style="left:119.9px">manage.py</div>
</div>
<div class="row" style="left:1px;top:617px;">
<svg style="left:46.2px;top:12px" width="19" height="16" viewBox="0 0 19 16"><path d="M0 0H18.6L9.3 15.8Z" fill="#a2a4a6"/></svg>
<svg style="position:absolute;left:86.0px;top:8.2px" width="29" height="23" viewBox="0 0 29 23" ><path d="M0 0H11.4L14.6 3.9H28V21.8H0Z" fill="#87939a"/><circle cx="9.9" cy="12.8" r="4.1" fill="#3c3f41"/></svg>
<div class="tt" style="left:120.4px">static</div>
</div>
<div class="row" style="left:1px;top:655px;">
<svg style="position:absolute;left:127.1px;top:3.0px" width="32" height="36" viewBox="0 0 32 36" ><g transform="translate(1 1)"><path d="M0 7.6L7.6 0V7.6Z" fill="#87939a"/><path d="M9.2 0H22V30H0V9.2H9.2Z" fill="#87939a"/></g><g transform="translate(7.4 11.6) scale(1.0)"><g stroke="#35383a" stroke-width="2.2" stroke-linejoin="round"><path d="M7.6 .6H13Q16 .6 16 3.6V8Q16 10.9 13 10.9H8.6Q5.6 10.9 5.6 13.9V16H3.6Q.6 16 .6 13V9Q.6 5.6 4 5.6H11V4.7H5.6V3Q5.6 .6 7.6 .6Z"/><path d="M7.6 .6H13Q16 .6 16 3.6V8Q16 10.9 13 10.9H8.6Q5.6 10.9 5.6 13.9V16H3.6Q.6 16 .6 13V9Q.6 5.6 4 5.6H11V4.7H5.6V3Q5.6 .6 7.6 .6Z" transform="rotate(180 11 11)"/></g><path d="M7.6 .6H13Q16 .6 16 3.6V8Q16 10.9 13 10.9H8.6Q5.6 10.9 5.6 13.9V16H3.6Q.6 16 .6 13V9Q.6 5.6 4 5.6H11V4.7H5.6V3Q5.6 .6 7.6 .6Z" fill="#3f9fd6"/><path d="M7.6 .6H13Q16 .6 16 3.6V8Q16 10.9 13 10.9H8.6Q5.6 10.9 5.6 13.9V16H3.6Q.6 16 .6 13V9Q.6 5.6 4 5.6H11V4.7H5.6V3Q5.6 .6 7.6 .6Z" transform="rotate(180 11 11)" fill="#f3c31c"/><circle cx="8.2" cy="3.1" r=".95" fill="#23567a"/><circle cx="13.8" cy="18.9" r=".95" fill="#6e560c"/></g></svg>
<div class="tt" style="left:160.0px"><span class="us">__</span>init<span class="us">__</span>.py</div>
</div>
<div class="row" style="left:1px;top:693px;">
<svg style="left:87.8px;top:9.6px" width="17" height="19" viewBox="0 0 17 19"><path d="M0 0V18.6L16 9.3Z" fill="#a2a4a6"/></svg>
<svg style="position:absolute;left:126.0px;top:8.2px" width="29" height="23" viewBox="0 0 29 23" ><path d="M0 0H11.4L14.6 3.9H28V21.8H0Z" fill="#87939a"/><circle cx="9.9" cy="12.8" r="4.1" fill="#3c3f41"/></svg>
<div class="tt" style="left:160.5px">bootstrap</div>
</div>
<div class="row" style="left:1px;top:731px;">
<svg style="left:87.8px;top:9.6px" width="17" height="19" viewBox="0 0 17 19"><path d="M0 0V18.6L16 9.3Z" fill="#a2a4a6"/></svg>
<svg style="position:absolute;left:126.0px;top:8.2px" width="29" height="23" viewBox="0 0 29 23" ><path d="M0 0H11.4L14.6 3.9H28V21.8H0Z" fill="#87939a"/><circle cx="9.9" cy="12.8" r="4.1" fill="#3c3f41"/></svg>
<div class="tt" style="left:160.5px">fontawesome</div>
</div>
<div class="row" style="left:1px;top:769px;">
<svg style="position:absolute;left:124.9px;top:3.0px" width="33" height="36" viewBox="0 0 33 36" ><g transform="translate(3.2 1)"><path d="M0 7.6L7.6 0V7.6Z" fill="#87939a"/><path d="M9.2 0H22V15.8H0V9.2H9.2Z" fill="#87939a"/></g><rect x="1" y="19" width="30.2" height="14" fill="#d5652b"/><text x="4.0" y="31.3" font-family="Liberation Sans, sans-serif" font-weight="bold" font-size="12.6" fill="#5c2307" textLength="13.5" lengthAdjust="spacingAndGlyphs">JS</text></svg>
<div class="tt" style="left:160.5px">jquery-3.3.1.js</div>
</div>
<div class="row" style="left:1px;top:807px;background:#0d293e">
<svg style="position:absolute;left:124.9px;top:3.0px" width="33" height="36" viewBox="0 0 33 36" ><g transform="translate(3.2 1)"><path d="M0 7.6L7.6 0V7.6Z" fill="#87939a"/><path d="M9.2 0H22V15.8H0V9.2H9.2Z" fill="#87939a"/></g><rect x="1" y="19" width="30.2" height="14" fill="#5d9f4e"/><text x="2.6" y="31.3" font-family="Liberation Sans, sans-serif" font-weight="bold" font-size="12.6" fill="#1f4a19" textLength="26" lengthAdjust="spacingAndGlyphs">CSS</text></svg>
<div class="tt" style="left:160.5px">mystyle.css</div>
</div>
<div class="row" style="left:1px;top:845px;">
<svg style="position:absolute;left:124.9px;top:3.0px" width="33" height="36" viewBox="0 0 33 36" ><g transform="translate(3.2 1)"><path d="M0 7.6L7.6 0V7.6Z" fill="#87939a"/><path d="M9.2 0H22V15.8H0V9.2H9.2Z" fill="#87939a"/></g><rect x="1" y="19" width="30.2" height="14" fill="#d5652b"/><text x="4.0" y="31.3" font-family="Liberation Sans, sans-serif" font-weight="bold" font-size="12.6" fill="#5c2307" textLength="13.5" lengthAdjust="spacingAndGlyphs">JS</text></svg>
<div class="tt" style="left:160.5px">setupajax.js</div>
</div>
<div class="row" style="left:1px;top:883px;">
<svg style="left:46.2px;top:12px" width="19" height="16" viewBox="0 0 19 16"><path d="M0 0H18.6L9.3 15.8Z" fill="#a2a4a6"/></svg>
<svg style="position:absolute;left:86.0px;top:8.2px" width="29" height="23" viewBox="0 0 29 23" ><path d="M0 0H11.4L14.6 3.9H28V21.8H0Z" fill="#8e79ba"/></svg>
<div class="tt" style="left:120.4px">templates</div>
</div>
<div class="row" style="left:1px;top:921px;">
<svg style="position:absolute;left:124.9px;top:3.0px" width="33" height="36" viewBox="0 0 33 36" ><g transform="translate(3.2 1)"><path d="M0 7.6L7.6 0V7.6Z" fill="#87939a"/><path d="M9.2 0H22V15.8H0V9.2H9.2Z" fill="#87939a"/></g><rect x="1" y="19" width="30.2" height="14" fill="#5d9f4e"/><text x="4.4" y="31.3" font-family="Liberation Sans, sans-serif" font-weight="bold" font-size="12.6" fill="#1f4a19" textLength="8.4" lengthAdjust="spacingAndGlyphs">H</text></svg>
<div class="tt" style="left:160.5px">index.html</div>
</div>
<div class="row" style="left:1px;top:959px;">
<svg style="position:absolute;left:124.9px;top:3.0px" width="33" height="36" viewBox="0 0 33 36" ><g transform="translate(3.2 1)"><path d="M0 7.6L7.6 0V7.6Z" fill="#87939a"/><path d="M9.2 0H22V15.8H0V9.2H9.2Z" fill="#87939a"/></g><rect x="1" y="19" width="30.2" height="14" fill="#5d9f4e"/><text x="4.4" y="31.3" font-family="Liberation Sans, sans-serif" font-weight="bold" font-size="12.6" fill="#1f4a19" textLength="8.4" lengthAdjust="spacingAndGlyphs">H</text></svg>
<div class="tt" style="left:160.5px">login.html</div>
</div>
<div class="row" style="left:1px;top:997px;">
<svg style="left:6.6px;top:9.6px" width="17" height="19" viewBox="0 0 17 19"><path d="M0 0V18.6L16 9.3Z" fill="#a2a4a6"/></svg>
<svg style="position:absolute;left:46.0px;top:6.6px" width="29" height="26" viewBox="0 0 29 26" ><rect x="0" y="5.5" width="3.8" height="19.5" fill="#9aa7b0"/><rect x="6" y="3" width="3.8" height="22" fill="#62b543"/><rect x="12" y="0" width="3.8" height="25" fill="#9aa7b0"/><rect x="18" y="3" width="3.8" height="22" fill="#40b6e0"/><rect x="24" y="7.5" width="3.8" height="17.5" fill="#9aa7b0"/></svg>
<div class="tt" style="left:80.3px">External Libraries</div>
</div>
</div>
<div style="left:438px;top:104.5px;width:2.2px;height:1408px;background:#232527"></div>
<div style="left:440px;top:106px;width:2079px;height:47.5px;background:#3c3f41"></div><div style="left:440px;top:106px;width:2079px;height:1px;background:#35383a"></div>
<div style="left:440px;top:106px;width:168.6px;height:47.5px;background:#3c3f41"></div>
<div style="left:607.6px;top:106px;width:1.6px;height:47.5px;background:#323537"></div>
<svg style="position:absolute;left:458.8px;top:112.9px" width="32" height="36" viewBox="0 0 32 36" ><g transform="translate(1 1)"><path d="M0 7.6L7.6 0V7.6Z" fill="#87939a"/><path d="M9.2 0H22V30H0V9.2H9.2Z" fill="#87939a"/></g><g transform="translate(7.4 11.6) scale(1.0)"><g stroke="#35383a" stroke-width="2.2" stroke-linejoin="round"><path d="M7.6 .6H13Q16 .6 16 3.6V8Q16 10.9 13 10.9H8.6Q5.6 10.9 5.6 13.9V16H3.6Q.6 16 .6 13V9Q.6 5.6 4 5.6H11V4.7H5.6V3Q5.6 .6 7.6 .6Z"/><path d="M7.6 .6H13Q16 .6 16 3.6V8Q16 10.9 13 10.9H8.6Q5.6 10.9 5.6 13.9V16H3.6Q.6 16 .6 13V9Q.6 5.6 4 5.6H11V4.7H5.6V3Q5.6 .6 7.6 .6Z" transform="rotate(180 11 11)"/></g><path d="M7.6 .6H13Q16 .6 16 3.6V8Q16 10.9 13 10.9H8.6Q5.6 10.9 5.6 13.9V16H3.6Q.6 16 .6 13V9Q.6 5.6 4 5.6H11V4.7H5.6V3Q5.6 .6 7.6 .6Z" fill="#3f9fd6"/><path d="M7.6 .6H13Q16 .6 16 3.6V8Q16 10.9 13 10.9H8.6Q5.6 10.9 5.6 13.9V16H3.6Q.6 16 .6 13V9Q.6 5.6 4 5.6H11V4.7H5.6V3Q5.6 .6 7.6 .6Z" transform="rotate(180 11 11)" fill="#f3c31c"/><circle cx="8.2" cy="3.1" r=".95" fill="#23567a"/><circle cx="13.8" cy="18.9" r=".95" fill="#6e560c"/></g></svg>
<div style="position:absolute;left:493.4px;top:115.0px;font-size:23.8px;line-height:31px;color:#c6c6c6;font-weight:normal;white-space:pre;">urls.py</div>
<svg style="left:578.8px;top:124.6px" width="14" height="14" viewBox="0 0 14 14"><path d="M1 1L13 13M13 1L1 13" stroke="#85888a" stroke-width="2.1" fill="none"/></svg>
<div style="left:608.6px;top:106px;width:192.0px;height:47.5px;background:#3c3f41"></div>
<div style="left:799.6px;top:106px;width:1.6px;height:47.5px;background:#323537"></div>
<svg style="position:absolute;left:629.0px;top:112.9px" width="32" height="36" viewBox="0 0 32 36" ><g transform="translate(1 1)"><path d="M0 7.6L7.6 0V7.6Z" fill="#87939a"/><path d="M9.2 0H22V30H0V9.2H9.2Z" fill="#87939a"/></g><g transform="translate(7.4 11.6) scale(1.0)"><g stroke="#35383a" stroke-width="2.2" stroke-linejoin="round"><path d="M7.6 .6H13Q16 .6 16 3.6V8Q16 10.9 13 10.9H8.6Q5.6 10.9 5.6 13.9V16H3.6Q.6 16 .6 13V9Q.6 5.6 4 5.6H11V4.7H5.6V3Q5.6 .6 7.6 .6Z"/><path d="M7.6 .6H13Q16 .6 16 3.6V8Q16 10.9 13 10.9H8.6Q5.6 10.9 5.6 13.9V16H3.6Q.6 16 .6 13V9Q.6 5.6 4 5.6H11V4.7H5.6V3Q5.6 .6 7.6 .6Z" transform="rotate(180 11 11)"/></g><path d="M7.6 .6H13Q16 .6 16 3.6V8Q16 10.9 13 10.9H8.6Q5.6 10.9 5.6 13.9V16H3.6Q.6 16 .6 13V9Q.6 5.6 4 5.6H11V4.7H5.6V3Q5.6 .6 7.6 .6Z" fill="#3f9fd6"/><path d="M7.6 .6H13Q16 .6 16 3.6V8Q16 10.9 13 10.9H8.6Q5.6 10.9 5.6 13.9V16H3.6Q.6 16 .6 13V9Q.6 5.6 4 5.6H11V4.7H5.6V3Q5.6 .6 7.6 .6Z" transform="rotate(180 11 11)" fill="#f3c31c"/><circle cx="8.2" cy="3.1" r=".95" fill="#23567a"/><circle cx="13.8" cy="18.9" r=".95" fill="#6e560c"/></g></svg>
<div style="position:absolute;left:664.6px;top:115.0px;font-size:23.8px;line-height:31px;color:#c6c6c6;font-weight:normal;white-space:pre;">views.py</div>
<svg style="left:770.3px;top:124.6px" width="14" height="14" viewBox="0 0 14 14"><path d="M1 1L13 13M13 1L1 13" stroke="#85888a" stroke-width="2.1" fill="none"/></svg>
<div style="left:800.6px;top:106px;width:204.2px;height:47.5px;background:#505456"></div>
<div style="left:800.6px;top:148px;width:204.2px;height:5.5px;background:#3fb0cf"></div>
<div style="left:1003.8px;top:106px;width:1.6px;height:47.5px;background:#323537"></div>
<svg style="position:absolute;left:818.9px;top:112.9px" width="33" height="36" viewBox="0 0 33 36" ><g transform="translate(3.2 1)"><path d="M0 7.6L7.6 0V7.6Z" fill="#87939a"/><path d="M9.2 0H22V15.8H0V9.2H9.2Z" fill="#87939a"/></g><rect x="1" y="19" width="30.2" height="14" fill="#5d9f4e"/><text x="4.4" y="31.3" font-family="Liberation Sans, sans-serif" font-weight="bold" font-size="12.6" fill="#1f4a19" textLength="8.4" lengthAdjust="spacingAndGlyphs">H</text></svg>
<div style="position:absolute;left:856.4px;top:115.0px;font-size:23.8px;line-height:31px;color:#d2d2d2;font-weight:normal;white-space:pre;">login.html</div>
<svg style="left:973.2px;top:124.6px" width="14" height="14" viewBox="0 0 14 14"><path d="M1 1L13 13M13 1L1 13" stroke="#85888a" stroke-width="2.1" fill="none"/></svg>
<div style="left:1004.8px;top:106px;width:223.7px;height:47.5px;background:#3c3f41"></div>
<div style="left:1227.5px;top:106px;width:1.6px;height:47.5px;background:#323537"></div>
<svg style="position:absolute;left:1023.0px;top:112.9px" width="33" height="36" viewBox="0 0 33 36" ><g transform="translate(3.2 1)"><path d="M0 7.6L7.6 0V7.6Z" fill="#87939a"/><path d="M9.2 0H22V15.8H0V9.2H9.2Z" fill="#87939a"/></g><rect x="1" y="19" width="30.2" height="14" fill="#5d9f4e"/><text x="2.6" y="31.3" font-family="Liberation Sans, sans-serif" font-weight="bold" font-size="12.6" fill="#1f4a19" textLength="26" lengthAdjust="spacingAndGlyphs">CSS</text></svg>
<div style="position:absolute;left:1060.6px;top:115.0px;font-size:23.8px;line-height:31px;color:#c6c6c6;font-weight:normal;white-space:pre;">mystyle.css</div>
<svg style="left:1197.5px;top:124.6px" width="14" height="14" viewBox="0 0 14 14"><path d="M1 1L13 13M13 1L1 13" stroke="#85888a" stroke-width="2.1" fill="none"/></svg>
<div style="left:1228.5px;top:106px;width:205.0px;height:47.5px;background:#3c3f41"></div>
<div style="left:1432.5px;top:106px;width:1.6px;height:47.5px;background:#323537"></div>
<svg style="position:absolute;left:1249.4px;top:112.9px" width="32" height="36" viewBox="0 0 32 36" ><g transform="translate(1 1)"><path d="M0 7.6L7.6 0V7.6Z" fill="#87939a"/><path d="M9.2 0H22V30H0V9.2H9.2Z" fill="#87939a"/></g><g transform="translate(7.4 11.6) scale(1.0)"><g stroke="#35383a" stroke-width="2.2" stroke-linejoin="round"><path d="M7.6 .6H13Q16 .6 16 3.6V8Q16 10.9 13 10.9H8.6Q5.6 10.9 5.6 13.9V16H3.6Q.6 16 .6 13V9Q.6 5.6 4 5.6H11V4.7H5.6V3Q5.6 .6 7.6 .6Z"/><path d="M7.6 .6H13Q16 .6 16 3.6V8Q16 10.9 13 10.9H8.6Q5.6 10.9 5.6 13.9V16H3.6Q.6 16 .6 13V9Q.6 5.6 4 5.6H11V4.7H5.6V3Q5.6 .6 7.6 .6Z" transform="rotate(180 11 11)"/></g><path d="M7.6 .6H13Q16 .6 16 3.6V8Q16 10.9 13 10.9H8.6Q5.6 10.9 5.6 13.9V16H3.6Q.6 16 .6 13V9Q.6 5.6 4 5.6H11V4.7H5.6V3Q5.6 .6 7.6 .6Z" fill="#3f9fd6"/><path d="M7.6 .6H13Q16 .6 16 3.6V8Q16 10.9 13 10.9H8.6Q5.6 10.9 5.6 13.9V16H3.6Q.6 16 .6 13V9Q.6 5.6 4 5.6H11V4.7H5.6V3Q5.6 .6 7.6 .6Z" transform="rotate(180 11 11)" fill="#f3c31c"/><circle cx="8.2" cy="3.1" r=".95" fill="#23567a"/><circle cx="13.8" cy="18.9" r=".95" fill="#6e560c"/></g></svg>
<div style="position:absolute;left:1284.0px;top:115.0px;font-size:23.8px;line-height:31px;color:#c6c6c6;font-weight:normal;white-space:pre;"><span class="us">__</span>init<span class="us">__</span>.py</div>
<svg style="left:1402.0px;top:124.6px" width="14" height="14" viewBox="0 0 14 14"><path d="M1 1L13 13M13 1L1 13" stroke="#85888a" stroke-width="2.1" fill="none"/></svg>
<div style="left:1433.5px;top:106px;width:207.5px;height:47.5px;background:#3b3a37"></div>
<div style="left:1640.0px;top:106px;width:1.6px;height:47.5px;background:#323537"></div>
<svg style="position:absolute;left:1453.4px;top:112.9px" width="32" height="36" viewBox="0 0 32 36" ><g transform="translate(1 1)"><path d="M0 7.6L7.6 0V7.6Z" fill="#87939a"/><path d="M9.2 0H22V30H0V9.2H9.2Z" fill="#87939a"/></g><g transform="translate(7.4 11.6) scale(1.0)"><g stroke="#35383a" stroke-width="2.2" stroke-linejoin="round"><path d="M7.6 .6H13Q16 .6 16 3.6V8Q16 10.9 13 10.9H8.6Q5.6 10.9 5.6 13.9V16H3.6Q.6 16 .6 13V9Q.6 5.6 4 5.6H11V4.7H5.6V3Q5.6 .6 7.6 .6Z"/><path d="M7.6 .6H13Q16 .6 16 3.6V8Q16 10.9 13 10.9H8.6Q5.6 10.9 5.6 13.9V16H3.6Q.6 16 .6 13V9Q.6 5.6 4 5.6H11V4.7H5.6V3Q5.6 .6 7.6 .6Z" transform="rotate(180 11 11)"/></g><path d="M7.6 .6H13Q16 .6 16 3.6V8Q16 10.9 13 10.9H8.6Q5.6 10.9 5.6 13.9V16H3.6Q.6 16 .6 13V9Q.6 5.6 4 5.6H11V4.7H5.6V3Q5.6 .6 7.6 .6Z" fill="#3f9fd6"/><path d="M7.6 .6H13Q16 .6 16 3.6V8Q16 10.9 13 10.9H8.6Q5.6 10.9 5.6 13.9V16H3.6Q.6 16 .6 13V9Q.6 5.6 4 5.6H11V4.7H5.6V3Q5.6 .6 7.6 .6Z" transform="rotate(180 11 11)" fill="#f3c31c"/><circle cx="8.2" cy="3.1" r=".95" fill="#23567a"/><circle cx="13.8" cy="18.9" r=".95" fill="#6e560c"/></g></svg>
<div style="position:absolute;left:1488.6px;top:115.0px;font-size:23.8px;line-height:31px;color:#c6c6c6;font-weight:normal;white-space:pre;">models.py</div>
<svg style="left:1610.3px;top:124.6px" width="14" height="14" viewBox="0 0 14 14"><path d="M1 1L13 13M13 1L1 13" stroke="#85888a" stroke-width="2.1" fill="none"/></svg>
<div style="left:2519px;top:105px;width:2.5px;height:1408px;background:#555759"></div>
<div style="left:2521.5px;top:105px;width:38.5px;height:1408px;background:#3c3f41"></div>
<div style="left:2538.6px;top:159.6px;width:0;height:0"><div style="position:absolute;left:0;top:0;transform-origin:0 0;transform:rotate(90deg) translate(0,-50%);font-size:22.6px;line-height:22.6px;height:22.6px;white-space:pre;color:#bbbbbb">Database</div></div>
<div style="left:2538.6px;top:333.8px;width:0;height:0"><div style="position:absolute;left:0;top:0;transform-origin:0 0;transform:rotate(90deg) translate(0,-50%);font-size:22.6px;line-height:22.6px;height:22.6px;white-space:pre;color:#bbbbbb">Data View</div></div>
<svg style="position:absolute;left:2525.6px;top:126.0px" width="27" height="27" viewBox="0 0 27 27" ><ellipse cx="13.2" cy="4" rx="13.2" ry="3.8" fill="#3d9ec6"/><path d="M0 7.6A13.2 3.4 0 0 0 26.4 7.6V11.0A13.2 3.4 0 0 1 0 11.0Z" fill="#3d9ec6"/><path d="M0 13.6A13.2 3.4 0 0 0 26.4 13.6V17.0A13.2 3.4 0 0 1 0 17.0Z" fill="#3d9ec6"/><path d="M0 19.6A13.2 3.4 0 0 0 26.4 19.6V23.0A13.2 3.4 0 0 1 0 23.0Z" fill="#3d9ec6"/></svg><svg style="position:absolute;left:2525.6px;top:300.0px" width="27" height="27" viewBox="0 0 27 27" ><rect x="0" y="0" width="26.6" height="26" fill="#9aa3a9"/><rect x="2.2" y="2.2" width="22.2" height="3.4" fill="#c5cacd"/><rect x="2.4" y="7.4" width="4.6" height="4.2" fill="#3d9ec6"/><rect x="8.6" y="7.4" width="4.6" height="4.2" fill="#3d9ec6"/><rect x="14.8" y="7.4" width="4.6" height="4.2" fill="#3d9ec6"/><rect x="21.0" y="7.4" width="4.6" height="4.2" fill="#3d9ec6"/><rect x="2.4" y="13.4" width="4.6" height="4.2" fill="#3d9ec6"/><rect x="8.6" y="13.4" width="4.6" height="4.2" fill="#3d9ec6"/><rect x="14.8" y="13.4" width="4.6" height="4.2" fill="#3d9ec6"/><rect x="21.0" y="13.4" width="4.6" height="4.2" fill="#3d9ec6"/><rect x="2.4" y="19.4" width="4.6" height="4.2" fill="#3d9ec6"/><rect x="8.6" y="19.4" width="4.6" height="4.2" fill="#3d9ec6"/><rect x="14.8" y="19.4" width="4.6" height="4.2" fill="#3d9ec6"/><rect x="21.0" y="19.4" width="4.6" height="4.2" fill="#3d9ec6"/></svg>
<div id="editor">
<div style="left:0;top:55px;width:1978px;height:38px;background:#3e3d32"></div>
<div class="ln" style="top:-19.5px">42</div>
<div class="ln" style="top:18.5px">43</div>
<div class="ln" style="top:56.5px">44</div>
<div class="ln" style="top:94.5px">45</div>
<div class="ln" style="top:132.5px">46</div>
<div class="ln" style="top:170.5px">47</div>
<div class="ln" style="top:208.5px">48</div>
<div class="ln" style="top:246.5px">49</div>
<div class="ln" style="top:284.5px">50</div>
<div class="ln" style="top:322.5px">51</div>
<div class="ln" style="top:360.5px">52</div>
<div class="ln" style="top:398.5px">53</div>
<div class="ln" style="top:436.5px">54</div>
<div class="ln" style="top:474.5px">55</div>
<div class="ln" style="top:512.5px">56</div>
<div class="ln" style="top:550.5px">57</div>
<div class="ln" style="top:588.5px">58</div>
<div class="ln" style="top:626.5px">59</div>
<div class="ln" style="top:664.5px">60</div>
<div class="ln" style="top:702.5px">61</div>
<div class="ln" style="top:740.5px">62</div>
<div class="ln" style="top:778.5px">63</div>
<div class="ln" style="top:816.5px">64</div>
<div class="ln" style="top:854.5px">65</div>
<div class="ln" style="top:892.5px">66</div>
<div class="ln" style="top:930.5px">67</div>
<div class="ln" style="top:968.5px">68</div>
<div class="ln" style="top:1006.5px">69</div>
<div class="ln" style="top:1044.5px">70</div>
<div class="ln" style="top:1082.5px">71</div>
<div class="ln" style="top:1120.5px">72</div>
<div class="ln" style="top:1158.5px">73</div>
<div class="ln" style="top:1196.5px">74</div>
<div class="ln" style="top:1234.5px">75</div>
<div class="ln" style="top:1272.5px">76</div>
<div class="bg" style="left:248px;top:207px;width:208px"></div>
<div class="bg" style="left:552px;top:283px;width:144px"></div>
<div class="bg" style="left:552px;top:321px;width:144px"></div>
<div class="bg" style="left:792px;top:625px;width:16px"></div>
<div class="bg" style="left:808px;top:625px;width:64px"></div>
<div class="bg" style="left:872px;top:625px;width:16px"></div>
<div class="bg" style="left:888px;top:625px;width:336px"></div>
<div class="bg" style="left:1224px;top:625px;width:16px"></div>
<div class="bg" style="left:504px;top:853px;width:16px"></div>
<div class="bg" style="left:520px;top:853px;width:96px"></div>
<div class="bg" style="left:616px;top:853px;width:96px"></div>
<div class="ws" style="left:136px;top:-21px;width:64px"></div>
<div class="ws" style="left:248px;top:93px;width:16px"></div>
<div class="ws" style="left:248px;top:131px;width:16px"></div>
<div class="ws" style="left:136px;top:207px;width:64px"></div>
<div class="ws" style="left:136px;top:283px;width:128px"></div>
<div class="ws" style="left:312px;top:283px;width:16px"></div>
<div class="ws" style="left:456px;top:283px;width:16px"></div>
<div class="ws" style="left:488px;top:283px;width:16px"></div>
<div class="ws" style="left:136px;top:321px;width:128px"></div>
<div class="ws" style="left:312px;top:321px;width:16px"></div>
<div class="ws" style="left:456px;top:321px;width:16px"></div>
<div class="ws" style="left:488px;top:321px;width:16px"></div>
<div class="ws" style="left:136px;top:397px;width:128px"></div>
<div class="ws" style="left:136px;top:435px;width:192px"></div>
<div class="ws" style="left:136px;top:473px;width:192px"></div>
<div class="ws" style="left:136px;top:511px;width:192px"></div>
<div class="ws" style="left:136px;top:549px;width:256px"></div>
<div class="ws" style="left:136px;top:587px;width:256px"></div>
<div class="ws" style="left:136px;top:625px;width:256px"></div>
<div class="ws" style="left:136px;top:663px;width:192px"></div>
<div class="ws" style="left:136px;top:701px;width:192px"></div>
<div class="ws" style="left:584px;top:701px;width:16px"></div>
<div class="ws" style="left:696px;top:701px;width:16px"></div>
<div class="ws" style="left:136px;top:739px;width:256px"></div>
<div class="ws" style="left:136px;top:777px;width:256px"></div>
<div class="ws" style="left:424px;top:777px;width:16px"></div>
<div class="ws" style="left:168px;top:815px;width:320px"></div>
<div class="ws" style="left:136px;top:853px;width:320px"></div>
<div class="ws" style="left:136px;top:891px;width:256px"></div>
<div class="ws" style="left:168px;top:929px;width:320px"></div>
<div class="ws" style="left:136px;top:967px;width:320px"></div>
<div class="ws" style="left:136px;top:1005px;width:256px"></div>
<div class="ws" style="left:136px;top:1081px;width:192px"></div>
<div class="ws" style="left:136px;top:1119px;width:128px"></div>
<div class="ws" style="left:136px;top:1195px;width:128px"></div>
<div class="ws" style="left:136px;top:1233px;width:64px"></div>
<div class="ig" style="left:203.4px;top:245px;height:988px"></div>
<div class="ig" style="left:267.4px;top:435px;height:684px"></div>
<div class="ig" style="left:331.4px;top:549px;height:114px"></div>
<div class="ig" style="left:331.4px;top:739px;height:342px"></div>
<div class="ig" style="left:395.4px;top:815px;height:76px"></div>
<div class="ig" style="left:395.4px;top:929px;height:76px"></div>
<div class="cl" style="top:-20.2px;width:1800px"><span style="position:absolute;left:0px;top:0">    </span><span class="t" style="position:absolute;left:64px;top:0">&lt;/div&gt;</span></div>
<div class="cl" style="top:17.8px;width:1800px"><span class="t" style="position:absolute;left:0px;top:0">&lt;/div&gt;</span></div>
<div class="cl" style="top:93.8px;width:1800px"><span class="t" style="position:absolute;left:0px;top:0">&lt;script</span><span style="position:absolute;left:112px;top:0"> </span><span class="g" style="position:absolute;left:128px;top:0">src=</span><span class="y" style="position:absolute;left:192px;top:0">"/static/jquery-3.3.1.js"</span><span class="t" style="position:absolute;left:592px;top:0">&gt;&lt;/script&gt;</span></div>
<div class="cl" style="top:131.8px;width:1800px"><span class="t" style="position:absolute;left:0px;top:0">&lt;script</span><span style="position:absolute;left:112px;top:0"> </span><span class="g" style="position:absolute;left:128px;top:0">src=</span><span class="y" style="position:absolute;left:192px;top:0">"/static/bootstrap/js/bootstrap.min.js"</span><span class="t" style="position:absolute;left:816px;top:0">&gt;&lt;/script&gt;</span></div>
<div class="cl" style="top:169.8px;width:1800px"><span class="t" style="position:absolute;left:0px;top:0">&lt;script&gt;</span></div>
<div class="cl" style="top:207.8px;width:1800px"><span style="position:absolute;left:0px;top:0">    </span><span style="position:absolute;left:64px;top:0">$(</span><span class="y" style="position:absolute;left:96px;top:0">'</span><span class="g" style="position:absolute;left:112px;top:0">#login-button</span><span class="y" style="position:absolute;left:320px;top:0">'</span><span style="position:absolute;left:336px;top:0">)</span><span style="position:absolute;left:352px;top:0">.</span><span class="g" style="position:absolute;left:368px;top:0">click</span><span style="position:absolute;left:448px;top:0">(</span><span class="p" style="position:absolute;left:464px;top:0">function</span><span style="position:absolute;left:592px;top:0">(){</span></div>
<div class="cl" style="top:245.8px;width:1800px"><span class="c" style="position:absolute;left:0px;top:0">{#1.<span class="cj">取到用户填写的用户名和密码</span>--&gt;<span class="cj">取</span>input<span class="cj">框的值</span>#}</span></div>
<div class="cl" style="top:283.8px;width:1800px"><span style="position:absolute;left:0px;top:0">        </span><span class="p" style="position:absolute;left:128px;top:0">var</span><span style="position:absolute;left:176px;top:0"> username </span><span class="p" style="position:absolute;left:336px;top:0">=</span><span style="position:absolute;left:352px;top:0"> $(</span><span class="y" style="position:absolute;left:400px;top:0">'</span><span class="g" style="position:absolute;left:416px;top:0">#username</span><span class="y" style="position:absolute;left:560px;top:0">'</span><span style="position:absolute;left:576px;top:0">).</span><span style="position:absolute;left:608px;top:0">var</span><span style="position:absolute;left:656px;top:0">()</span><span class="o" style="position:absolute;left:688px;top:0">;</span></div>
<div class="cl" style="top:321.8px;width:1800px"><span style="position:absolute;left:0px;top:0">        </span><span class="p" style="position:absolute;left:128px;top:0">var</span><span style="position:absolute;left:176px;top:0"> password </span><span class="p" style="position:absolute;left:336px;top:0">=</span><span style="position:absolute;left:352px;top:0"> $(</span><span class="y" style="position:absolute;left:400px;top:0">'</span><span class="g" style="position:absolute;left:416px;top:0">#password</span><span class="y" style="position:absolute;left:560px;top:0">'</span><span style="position:absolute;left:576px;top:0">).</span><span style="position:absolute;left:608px;top:0">var</span><span style="position:absolute;left:656px;top:0">()</span><span class="o" style="position:absolute;left:688px;top:0">;</span></div>
<div class="cl" style="top:359.8px;width:1800px"><span class="c" style="position:absolute;left:0px;top:0">{#2.<span class="cj">用</span></span><span class="c i" style="position:absolute;left:92px;top:0">ajax</span><span class="c" style="position:absolute;left:156px;top:0"><span class="cj">发送到服务端</span>#}</span></div>
<div class="cl" style="top:397.8px;width:1800px"><span style="position:absolute;left:0px;top:0">        </span><span style="position:absolute;left:128px;top:0">$.ajax({</span></div>
<div class="cl" style="top:435.8px;width:1800px"><span style="position:absolute;left:0px;top:0">            </span><span style="position:absolute;left:192px;top:0">url</span><span class="p" style="position:absolute;left:240px;top:0">:</span><span class="y" style="position:absolute;left:256px;top:0">'/login/'</span><span class="o" style="position:absolute;left:400px;top:0">,</span></div>
<div class="cl" style="top:473.8px;width:1800px"><span style="position:absolute;left:0px;top:0">            </span><span style="position:absolute;left:192px;top:0">type</span><span class="p" style="position:absolute;left:256px;top:0">:</span><span class="y" style="position:absolute;left:272px;top:0">'post'</span><span class="o" style="position:absolute;left:368px;top:0">,</span></div>
<div class="cl" style="top:511.8px;width:1800px"><span style="position:absolute;left:0px;top:0">            </span><span style="position:absolute;left:192px;top:0">data</span><span class="p" style="position:absolute;left:256px;top:0">:</span><span style="position:absolute;left:272px;top:0">{</span></div>
<div class="cl" style="top:549.8px;width:1800px"><span style="position:absolute;left:0px;top:0">                </span><span class="y" style="position:absolute;left:256px;top:0">'username'</span><span class="p" style="position:absolute;left:416px;top:0">:</span><span style="position:absolute;left:432px;top:0">username</span><span class="o" style="position:absolute;left:560px;top:0">,</span></div>
<div class="cl" style="top:587.8px;width:1800px"><span style="position:absolute;left:0px;top:0">                </span><span class="y" style="position:absolute;left:256px;top:0">'password'</span><span class="p" style="position:absolute;left:416px;top:0">:</span><span style="position:absolute;left:432px;top:0">password</span><span class="o" style="position:absolute;left:560px;top:0">,</span></div>
<div class="cl" style="top:625.8px;width:1800px"><span style="position:absolute;left:0px;top:0">                </span><span class="y" style="position:absolute;left:256px;top:0">'</span><span class="y" style="position:absolute;left:272px;top:0">csrfmiddlewaretoken</span><span class="y" style="position:absolute;left:576px;top:0">'</span><span class="p" style="position:absolute;left:592px;top:0">:</span><span style="position:absolute;left:608px;top:0">$("</span><span style="position:absolute;left:656px;top:0">[</span><span class="g" style="position:absolute;left:672px;top:0">name</span><span class="p" style="position:absolute;left:736px;top:0">=</span><span class="y" style="position:absolute;left:752px;top:0">'csrfmiddlewaretoken'</span><span style="position:absolute;left:1088px;top:0">]</span><span style="position:absolute;left:1104px;top:0">")</span><span style="position:absolute;left:1136px;top:0">.</span><span class="g" style="position:absolute;left:1152px;top:0">val</span><span style="position:absolute;left:1200px;top:0">()</span></div>
<div class="cl" style="top:663.8px;width:1800px"><span style="position:absolute;left:0px;top:0">            </span><span style="position:absolute;left:192px;top:0">}</span><span class="o" style="position:absolute;left:208px;top:0">,</span></div>
<div class="cl" style="top:701.8px;width:1800px"><span style="position:absolute;left:0px;top:0">            </span><span class="g" style="position:absolute;left:192px;top:0">success</span><span class="p" style="position:absolute;left:304px;top:0">:</span><span class="p" style="position:absolute;left:320px;top:0">function</span><span style="position:absolute;left:448px;top:0"> (</span><span class="d" style="position:absolute;left:480px;top:0">data</span><span style="position:absolute;left:544px;top:0">) {</span></div>
<div class="cl" style="top:739.8px;width:1800px"><span style="position:absolute;left:0px;top:0">                </span><span style="position:absolute;left:256px;top:0">console.</span><span class="g" style="position:absolute;left:384px;top:0">log</span><span style="position:absolute;left:432px;top:0">(</span><span class="d" style="position:absolute;left:448px;top:0">data</span><span style="position:absolute;left:512px;top:0">)</span><span class="o" style="position:absolute;left:528px;top:0">;</span></div>
<div class="cl" style="top:777.8px;width:1800px"><span style="position:absolute;left:0px;top:0">                </span><span class="p" style="position:absolute;left:256px;top:0">if</span><span style="position:absolute;left:288px;top:0"> (</span><span class="d" style="position:absolute;left:320px;top:0">data</span><span style="position:absolute;left:384px;top:0">.status){</span></div>
<div class="cl" style="top:815.8px;width:1800px"><span class="c" style="position:absolute;left:0px;top:0">{#</span><span style="position:absolute;left:32px;top:0">                    </span><span class="c" style="position:absolute;left:352px;top:0"><span class="cj">有错误，在页面上提示</span>#}</span></div>
<div class="cl" style="top:853.8px;width:1800px"><span style="position:absolute;left:0px;top:0">                    </span><span style="position:absolute;left:320px;top:0">$(</span><span class="y" style="position:absolute;left:352px;top:0">'</span><span class="g" style="position:absolute;left:368px;top:0">.</span><span class="g" style="position:absolute;left:384px;top:0">logion</span><span class="g" style="position:absolute;left:480px;top:0">-error</span><span class="y" style="position:absolute;left:576px;top:0">'</span><span style="position:absolute;left:592px;top:0">).</span><span class="g" style="position:absolute;left:624px;top:0">text</span><span style="position:absolute;left:688px;top:0">(</span><span class="d" style="position:absolute;left:704px;top:0">data</span><span style="position:absolute;left:768px;top:0">.</span><span style="position:absolute;left:784px;top:0">msg</span><span style="position:absolute;left:832px;top:0">)</span><span class="o" style="position:absolute;left:848px;top:0">;</span></div>
<div class="cl" style="top:891.8px;width:1800px"><span style="position:absolute;left:0px;top:0">                </span><span style="position:absolute;left:256px;top:0">}</span><span class="p" style="position:absolute;left:272px;top:0">else</span><span style="position:absolute;left:336px;top:0">{</span></div>
<div class="cl" style="top:929.8px;width:1800px"><span class="c" style="position:absolute;left:0px;top:0">{#</span><span style="position:absolute;left:32px;top:0">                    </span><span class="c" style="position:absolute;left:352px;top:0"><span class="cj">登陆成功</span>#}</span></div>
<div class="cl" style="top:967.8px;width:1800px"><span style="position:absolute;left:0px;top:0">                    </span><span style="position:absolute;left:320px;top:0">location.heref</span><span class="p" style="position:absolute;left:544px;top:0">=</span><span class="d" style="position:absolute;left:560px;top:0">data</span><span style="position:absolute;left:624px;top:0">.</span><span style="position:absolute;left:640px;top:0">msg</span><span class="o" style="position:absolute;left:688px;top:0">;</span></div>
<div class="cl" style="top:1005.8px;width:1800px"><span style="position:absolute;left:0px;top:0">                </span><span style="position:absolute;left:256px;top:0">}</span></div>
<div class="cl" style="top:1081.8px;width:1800px"><span style="position:absolute;left:0px;top:0">            </span><span style="position:absolute;left:192px;top:0">}</span></div>
<div class="cl" style="top:1119.8px;width:1800px"><span style="position:absolute;left:0px;top:0">        </span><span style="position:absolute;left:128px;top:0">})</span></div>
<div class="cl" style="top:1195.8px;width:1800px"><span style="position:absolute;left:0px;top:0">        </span><span style="position:absolute;left:128px;top:0">}</span></div>
<div class="cl" style="top:1233.8px;width:1800px"><span style="position:absolute;left:0px;top:0">    </span><span style="position:absolute;left:64px;top:0">)</span></div>
<div class="cl" style="top:1271.8px;width:1800px"><span class="t" style="position:absolute;left:0px;top:0">&lt;/script&gt;</span></div>
<svg style="left:0;top:0" width="2079" height="1359" viewBox="0 0 2079 1359" fill="none" stroke-width="1.2"><path d="M744 320.2L748 317.2L752 320.2L756 317.2L760 320.2L764 317.2L768 320.2L772 317.2L776 320.2L780 317.2L784 320.2L788 317.2L792 320.2" stroke="#3f403a"/><path d="M744 358.2L748 355.2L752 358.2L756 355.2L760 358.2L764 355.2L768 358.2L772 355.2L776 358.2L780 355.2L784 358.2L788 355.2L792 358.2" stroke="#3f403a"/><path d="M408 662.2L412 659.2L416 662.2L420 659.2L424 662.2L428 659.2L432 662.2L436 659.2L440 662.2L444 659.2L448 662.2L452 659.2L456 662.2L460 659.2L464 662.2L468 659.2L472 662.2L476 659.2L480 662.2L484 659.2L488 662.2L492 659.2L496 662.2L500 659.2L504 662.2L508 659.2L512 662.2L516 659.2L520 662.2L524 659.2L528 662.2L532 659.2L536 662.2L540 659.2L544 662.2L548 659.2L552 662.2L556 659.2L560 662.2L564 659.2L568 662.2L572 659.2L576 662.2L580 659.2L584 662.2L588 659.2L592 662.2L596 659.2L600 662.2L604 659.2L608 662.2L612 659.2L616 662.2L620 659.2L624 662.2L628 659.2L632 662.2L636 659.2L640 662.2L644 659.2L648 662.2L652 659.2L656 662.2L660 659.2L664 662.2L668 659.2L672 662.2L676 659.2L680 662.2L684 659.2L688 662.2L692 659.2L696 662.2L700 659.2L704 662.2L708 659.2L712 662.2" stroke="#5d9163"/><path d="M520 890.2L524 887.2L528 890.2L532 887.2L536 890.2L540 887.2L544 890.2L548 887.2L552 890.2L556 887.2L560 890.2L564 887.2L568 890.2L572 887.2L576 890.2L580 887.2L584 890.2L588 887.2L592 890.2L596 887.2L600 890.2L604 887.2L608 890.2L612 887.2L616 890.2" stroke="#5d9163"/><path d="M920 890.2L924 887.2L928 890.2L932 887.2L936 890.2L940 887.2L944 890.2L948 887.2L952 890.2L956 887.2L960 890.2L964 887.2L968 890.2" stroke="#3f403a"/><path d="M776 1004.2L780 1001.2L784 1004.2L788 1001.2L792 1004.2L796 1001.2L800 1004.2L804 1001.2L808 1004.2L812 1001.2L816 1004.2L820 1001.2L824 1004.2" stroke="#3f403a"/></svg>
<svg style="left:100px;top:0" width="44" height="1359" viewBox="100 0 44 1359" fill="none" stroke="#5b5c56" stroke-width="1.9"><path d="M122 0V1316" stroke="#50514b" stroke-width="1.6"/><path d="M111.6 179.4H132.6V193.8L122.1 203.0L111.6 193.8Z" fill="#272822"/><path d="M115.8 187.20000000000002H128.8"/><path d="M111.6 217.4H132.6V231.8L122.1 241.0L111.6 231.8Z" fill="#272822"/><path d="M115.8 225.20000000000002H128.8"/><path d="M111.6 407.4H132.6V421.79999999999995L122.1 431.0L111.6 421.79999999999995Z" fill="#272822"/><path d="M115.8 415.2H128.8"/><path d="M111.6 521.4H132.6V535.8L122.1 545.0L111.6 535.8Z" fill="#272822"/><path d="M115.8 529.1999999999999H128.8"/><path d="M111.6 711.4H132.6V725.8L122.1 735.0L111.6 725.8Z" fill="#272822"/><path d="M115.8 719.1999999999999H128.8"/><path d="M111.6 787.4H132.6V801.8L122.1 811.0L111.6 801.8Z" fill="#272822"/><path d="M115.8 795.1999999999999H128.8"/><path d="M122.1 -14.8L132.6 -5.600000000000001V9.599999999999998H111.6V-5.600000000000001Z" fill="#272822"/><path d="M115.8 1.3999999999999986H128.8"/><path d="M122.1 23.2L132.6 32.4V47.599999999999994H111.6V32.4Z" fill="#272822"/><path d="M115.8 39.4H128.8"/><path d="M122.1 669.2L132.6 678.4000000000001V693.6H111.6V678.4000000000001Z" fill="#272822"/><path d="M115.8 685.4000000000001H128.8"/><path d="M122.1 897.2L132.6 906.4000000000001V921.6H111.6V906.4000000000001Z" fill="#272822"/><path d="M115.8 913.4000000000001H128.8"/><path d="M122.1 1011.2L132.6 1020.4000000000001V1035.6000000000001H111.6V1020.4000000000001Z" fill="#272822"/><path d="M115.8 1027.4H128.8"/><path d="M122.1 1087.2L132.6 1096.4V1111.6000000000001H111.6V1096.4Z" fill="#272822"/><path d="M115.8 1103.4H128.8"/><path d="M122.1 1125.2L132.6 1134.4V1149.6000000000001H111.6V1134.4Z" fill="#272822"/><path d="M115.8 1141.4H128.8"/><path d="M122.1 1201.2L132.6 1210.4V1225.6000000000001H111.6V1210.4Z" fill="#272822"/><path d="M115.8 1217.4H128.8"/><path d="M122.1 1277.2L132.6 1286.4V1301.6000000000001H111.6V1286.4Z" fill="#272822"/><path d="M115.8 1293.4H128.8"/></svg>
<div style="left:0;top:1314px;width:2079px;height:45px;background:#272822"></div>
<div style="left:0;top:1315px;width:2079px;height:2px;background:#45463f"></div>
<div style="position:absolute;left:142.2px;top:1322.3px;font-size:24.5px;line-height:32px;color:#c2c2c2;font-weight:normal;white-space:pre;">html</div>
<div style="position:absolute;left:238.2px;top:1322.3px;font-size:24.5px;line-height:32px;color:#c2c2c2;font-weight:normal;white-space:pre;">body</div>
<svg style="left:211.5px;top:1332.6px" width="10" height="16" viewBox="0 0 10 16"><path d="M2.6 2L7.6 7.4L2.6 12.8" stroke="#d8d8d8" stroke-width="1.9" fill="none"/></svg>
<div style="left:1978px;top:0;width:101px;height:1314px;background:#272822"></div>
<div style="left:1978px;top:237px;width:101px;height:195.5px;background:#40413c"></div>
<svg style="left:1978px;top:0px" width="101" height="640" viewBox="0 0 101 640" shape-rendering="crispEdges"><rect x="2" y="9" width="17.6" height="4" fill="#7b7c77"/><rect x="22" y="9" width="9.6" height="4" fill="#7b7c77"/><rect x="2" y="15" width="9.6" height="4" fill="#7b7c77"/><rect x="14" y="15" width="19.6" height="4" fill="#7b7c77"/><rect x="2" y="21" width="11.6" height="4" fill="#7b7c77"/><rect x="10" y="27" width="9.6" height="4" fill="#7b7c77"/><rect x="22" y="27" width="31.6" height="4" fill="#7b7c77"/><rect x="10" y="33" width="9.6" height="4" fill="#7b7c77"/><rect x="22" y="33" width="29.6" height="4" fill="#7b7c77"/><rect x="54" y="33" width="46.1" height="4" fill="#7b7c77"/><rect x="10" y="39" width="37.6" height="4" fill="#7b7c77"/><rect x="10" y="45" width="9.6" height="4" fill="#7b7c77"/><rect x="22" y="45" width="31.6" height="4" fill="#7b7c77"/><rect x="56" y="45" width="44.1" height="4" fill="#7b7c77"/><rect x="10" y="51" width="9.6" height="4" fill="#7b7c77"/><rect x="22" y="51" width="31.6" height="4" fill="#7b7c77"/><rect x="56" y="51" width="44.1" height="4" fill="#7b7c77"/><rect x="2" y="57" width="13.6" height="4" fill="#7b7c77"/><rect x="2" y="63" width="11.6" height="4" fill="#7b7c77"/><rect x="2" y="69" width="7.6" height="4" fill="#7b7c77"/><rect x="12" y="69" width="35.6" height="4" fill="#7b7c77"/><rect x="10" y="75" width="7.6" height="4" fill="#7b7c77"/><rect x="20" y="75" width="23.6" height="4" fill="#7b7c77"/><rect x="18" y="81" width="9.6" height="4" fill="#7b7c77"/><rect x="30" y="81" width="45.6" height="4" fill="#7b7c77"/><rect x="78" y="81" width="17.6" height="4" fill="#7b7c77"/><rect x="98" y="81" width="2.1" height="4" fill="#7b7c77"/><rect x="26" y="87" width="3.6" height="4" fill="#7b7c77"/><rect x="32" y="87" width="19.6" height="4" fill="#7d8196"/><rect x="54" y="87" width="3.6" height="4" fill="#7b7c77"/><rect x="26" y="93" width="7.6" height="4" fill="#7b7c77"/><rect x="36" y="93" width="37.6" height="4" fill="#7b7c77"/><rect x="34" y="99" width="11.6" height="4" fill="#7b7c77"/><rect x="48" y="99" width="19.6" height="4" fill="#7b7c77"/><rect x="70" y="99" width="29.6" height="4" fill="#7b7c77"/><rect x="34" y="105" width="7.6" height="4" fill="#7b7c77"/><rect x="44" y="105" width="35.6" height="4" fill="#7b7c77"/><rect x="42" y="111" width="11.6" height="4" fill="#7b7c77"/><rect x="56" y="111" width="21.6" height="4" fill="#7b7c77"/><rect x="80" y="111" width="20.1" height="4" fill="#7b7c77"/><rect x="34" y="117" width="11.6" height="4" fill="#7b7c77"/><rect x="26" y="123" width="11.6" height="4" fill="#7b7c77"/><rect x="26" y="129" width="7.6" height="4" fill="#7b7c77"/><rect x="36" y="129" width="37.6" height="4" fill="#7b7c77"/><rect x="34" y="135" width="11.6" height="4" fill="#7b7c77"/><rect x="48" y="135" width="19.6" height="4" fill="#7b7c77"/><rect x="70" y="135" width="29.6" height="4" fill="#7b7c77"/><rect x="34" y="141" width="7.6" height="4" fill="#7b7c77"/><rect x="44" y="141" width="35.6" height="4" fill="#7b7c77"/><rect x="42" y="147" width="11.6" height="4" fill="#7b7c77"/><rect x="56" y="147" width="29.6" height="4" fill="#7b7c77"/><rect x="88" y="147" width="12.1" height="4" fill="#7b7c77"/><rect x="34" y="153" width="11.6" height="4" fill="#7b7c77"/><rect x="26" y="159" width="11.6" height="4" fill="#7b7c77"/><rect x="2" y="165" width="3.6" height="4" fill="#4d4e48"/><rect x="30" y="165" width="7.6" height="4" fill="#4d4e48"/><rect x="40" y="165" width="41.6" height="4" fill="#4d4e48"/><rect x="2" y="171" width="3.6" height="4" fill="#4d4e48"/><rect x="38" y="171" width="7.6" height="4" fill="#4d4e48"/><rect x="48" y="171" width="43.6" height="4" fill="#4d4e48"/><rect x="94" y="171" width="6.1" height="4" fill="#4d4e48"/><rect x="2" y="177" width="3.6" height="4" fill="#4d4e48"/><rect x="46" y="177" width="7.6" height="4" fill="#4d4e48"/><rect x="56" y="177" width="37.6" height="4" fill="#4d4e48"/><rect x="2" y="183" width="3.6" height="4" fill="#4d4e48"/><rect x="54" y="183" width="21.6" height="4" fill="#4d4e48"/><rect x="2" y="189" width="3.6" height="4" fill="#4d4e48"/><rect x="62" y="189" width="11.6" height="4" fill="#4d4e48"/><rect x="76" y="189" width="24.1" height="4" fill="#4d4e48"/><rect x="2" y="195" width="3.6" height="4" fill="#4d4e48"/><rect x="54" y="195" width="19.6" height="4" fill="#4d4e48"/><rect x="2" y="201" width="3.6" height="4" fill="#4d4e48"/><rect x="46" y="201" width="15.6" height="4" fill="#4d4e48"/><rect x="2" y="207" width="3.6" height="4" fill="#4d4e48"/><rect x="38" y="207" width="15.6" height="4" fill="#4d4e48"/><rect x="2" y="213" width="3.6" height="4" fill="#4d4e48"/><rect x="30" y="213" width="15.6" height="4" fill="#4d4e48"/><rect x="26" y="219" width="7.6" height="4" fill="#7b7c77"/><rect x="36" y="219" width="37.6" height="4" fill="#7b7c77"/><rect x="34" y="225" width="7.6" height="4" fill="#7b7c77"/><rect x="44" y="225" width="43.6" height="4" fill="#7b7c77"/><rect x="90" y="225" width="10.1" height="4" fill="#7b7c77"/><rect x="42" y="231" width="13.6" height="4" fill="#7b7c77"/><rect x="58" y="231" width="25.6" height="4" fill="#7b7c77"/><rect x="86" y="231" width="14.1" height="4" fill="#7b7c77"/><rect x="34" y="237" width="11.6" height="4" fill="#7b7c77"/><rect x="26" y="243" width="11.6" height="4" fill="#7b7c77"/><rect x="18" y="249" width="13.6" height="4" fill="#7b7c77"/><rect x="10" y="255" width="11.6" height="4" fill="#7b7c77"/><rect x="2" y="261" width="11.6" height="4" fill="#7b7c77"/><rect x="2" y="273" width="13.6" height="4" fill="#7b7c77"/><rect x="18" y="273" width="77.6" height="4" fill="#7b7c77"/><rect x="2" y="279" width="13.6" height="4" fill="#7b7c77"/><rect x="18" y="279" width="82.1" height="4" fill="#7b7c77"/><rect x="2" y="285" width="15.6" height="4" fill="#7b7c77"/><rect x="10" y="291" width="71.6" height="4" fill="#7b7c77"/><rect x="2" y="297" width="61.6" height="4" fill="#4d4e48"/><rect x="18" y="303" width="5.6" height="4" fill="#7b7c77"/><rect x="26" y="303" width="15.6" height="4" fill="#7b7c77"/><rect x="44" y="303" width="1.6" height="4" fill="#7b7c77"/><rect x="48" y="303" width="41.6" height="4" fill="#7b7c77"/><rect x="18" y="309" width="5.6" height="4" fill="#7b7c77"/><rect x="26" y="309" width="15.6" height="4" fill="#7b7c77"/><rect x="44" y="309" width="1.6" height="4" fill="#7b7c77"/><rect x="48" y="309" width="41.6" height="4" fill="#7b7c77"/><rect x="2" y="315" width="33.6" height="4" fill="#4d4e48"/><rect x="18" y="321" width="15.6" height="4" fill="#7b7c77"/><rect x="26" y="327" width="27.6" height="4" fill="#7b7c77"/><rect x="26" y="333" width="23.6" height="4" fill="#7b7c77"/><rect x="26" y="339" width="11.6" height="4" fill="#7b7c77"/><rect x="34" y="345" width="39.6" height="4" fill="#7b7c77"/><rect x="34" y="351" width="39.6" height="4" fill="#7b7c77"/><rect x="34" y="357" width="66.1" height="4" fill="#7b7c77"/><rect x="26" y="363" width="3.6" height="4" fill="#7b7c77"/><rect x="26" y="369" width="31.6" height="4" fill="#7b7c77"/><rect x="60" y="369" width="11.6" height="4" fill="#7b7c77"/><rect x="74" y="369" width="1.6" height="4" fill="#7b7c77"/><rect x="34" y="375" width="35.6" height="4" fill="#7b7c77"/><rect x="34" y="381" width="3.6" height="4" fill="#7b7c77"/><rect x="40" y="381" width="27.6" height="4" fill="#7b7c77"/><rect x="2" y="387" width="3.6" height="4" fill="#4d4e48"/><rect x="46" y="387" width="23.6" height="4" fill="#4d4e48"/><rect x="42" y="393" width="58.1" height="4" fill="#7b7c77"/><rect x="34" y="399" width="11.6" height="4" fill="#7b7c77"/><rect x="2" y="405" width="3.6" height="4" fill="#4d4e48"/><rect x="46" y="405" width="11.6" height="4" fill="#4d4e48"/><rect x="42" y="411" width="47.6" height="4" fill="#7b7c77"/><rect x="34" y="417" width="1.6" height="4" fill="#7b7c77"/><rect x="26" y="429" width="1.6" height="4" fill="#7b7c77"/><rect x="18" y="435" width="3.6" height="4" fill="#7b7c77"/><rect x="18" y="447" width="1.6" height="4" fill="#7b7c77"/><rect x="10" y="453" width="1.6" height="4" fill="#7b7c77"/><rect x="2" y="459" width="17.6" height="4" fill="#7b7c77"/><rect x="2" y="465" width="13.6" height="4" fill="#7b7c77"/><rect x="2" y="471" width="13.6" height="4" fill="#7b7c77"/></svg>
<div style="left:1954px;top:5px;width:20px;height:20px;background:#efcb0c"></div>
<div style="left:1950px;top:294.8px;width:28px;height:4.4px;background:#efcb0c"></div>
<div style="left:1958px;top:678px;width:15.4px;height:527px;border-radius:8px;background:#5e5e5b"></div>
<div style="left:1950px;top:789px;width:28px;height:4px;background:#e4e4c4"></div>
<div style="left:1950px;top:804.8px;width:28px;height:4px;background:#e4e4c4"></div>
<div style="left:1950px;top:1021px;width:28px;height:4px;background:#e4e4c4"></div>
<div style="left:1950px;top:1066.8px;width:28px;height:4px;background:#e4e4c4"></div>
<div style="left:1710.3000000000002px;top:41px;width:189.8px;height:54px;border-radius:5px;background:rgba(255,255,255,.125)"></div>
<svg style="position:absolute;left:1710.3px;top:41.0px" width="190" height="54" viewBox="0 0 190 54" ><g transform="translate(29.8 28.2)"><circle r="14.2" fill="#e33b2e"/><path d="M0 0L-12.3 -7.1A14.2 14.2 0 0 0 -1.6 14.1L6 2.4Z" fill="#3aa757" transform="rotate(0)"/><path d="M-12.3 -7.1A14.2 14.2 0 0 0 -1.4 14.13L5.6 3.2L0 0Z" fill="#4bb04f"/><path d="M14.2 -2A14.2 14.2 0 0 1 -1.4 14.13L5.8 1.6L0 -6.4H13.4Z" fill="#fbd116"/><circle r="6.6" fill="#f4f6f8"/><circle r="5.1" fill="#3f86d8"/></g><g transform="translate(73.6 28.2)"><defs><linearGradient id="ffg" x1="0" y1="0" x2="1" y2="1"><stop offset="0" stop-color="#f7a01e"/><stop offset="1" stop-color="#e2461a"/></linearGradient><radialGradient id="ffb" cx=".4" cy=".3" r=".7"><stop offset="0" stop-color="#3d8fe0"/><stop offset="1" stop-color="#0e3a86"/></radialGradient></defs><circle r="14.4" fill="url(#ffg)"/><circle cx="1.8" cy="-2.6" r="10.6" fill="url(#ffb)"/><path d="M-13.8 -4.6C-13 -8.6 -10.4 -11.6 -8.2 -12.6C-8.6 -10.6 -8 -9 -6.6 -8C-4.8 -8.8 -2.6 -8.4 -1.4 -7.4C-3.6 -6.6 -4.6 -4.6 -3.6 -2.8C-2.4 -1.6 -0.6 -1.8 0.6 -1C-0.4 0.6 -2.6 1.2 -4 0.4C-3.6 3.4 -0.6 5.4 2.6 4.6C5.4 3.8 7.4 1.8 8 -0.6C10 4.6 6.6 9.6 1.6 10.6C5.6 12.4 11 10 13.2 5.2C14.2 2.6 14.4 -0.4 13.8 -2.8C15.8 3.6 13 10.6 7 13.4C0.4 16.2 -7.8 14 -11.8 8C-14.2 4.2 -14.8 -0.6 -13.8 -4.6Z" fill="#ef7a1f"/><path d="M8.6 -11.2C12.6 -8 14.8 -3 14 2.4C13.4 6 11.6 8.8 9.2 10.6C12 6.6 12.6 0 10.6 -4.6C10 -7 9.4 -9.2 8.6 -11.2Z" fill="#fbd44c"/></g><g transform="translate(117.8 28.2)"><circle r="14.6" fill="#e8eaee"/><circle r="13" fill="#2b8fe8"/><circle r="13" fill="none" stroke="#7fc2f8" stroke-width="1.6" stroke-dasharray=".8 1.2"/><path d="M8.4 -8.4L1.6 1.6L-1.6 -1.6Z" fill="#ea3b36"/><path d="M-8.4 8.4L1.6 1.6L-1.6 -1.6Z" fill="#f4f4f4"/></g><g transform="translate(162 28.2)"><path fill-rule="evenodd" d="M0 -14.6A14.6 14.6 0 1 1 0 14.6A14.6 14.6 0 1 1 0 -14.6ZM0 -11.9C-4.5 -11.9 -6.7 -6 -6.7 0C-6.7 6 -4.5 11.9 0 11.9C4.5 11.9 6.7 6 6.7 0C6.7 -6 4.5 -11.9 0 -11.9Z" fill="#e81828"/><path d="M5 -13.6A14.6 14.6 0 0 1 5 13.6C10 9 10 -9 5 -13.6Z" fill="#f2424c" opacity=".7"/></g></svg>
<svg style="left:0;top:0" width="2079" height="1359" viewBox="0 0 2079 1359" fill="none" stroke="#f42a20"><rect x="178.8" y="201.8" width="313.0" height="42.4" rx="7.2" stroke-width="5.6"/><rect x="235.2" y="280.2" width="658.6" height="42.2" rx="7.2" stroke-width="5.6"/><rect x="235.2" y="326.0" width="658.6" height="40.6" rx="7.2" stroke-width="5.6"/><rect x="278.6" y="436.0" width="292.6" height="36.6" rx="7.0" stroke-width="6"/><rect x="280.4" y="479.0" width="290.0" height="32.4" rx="7.0" stroke-width="6"/><rect x="272.8" y="515.4" width="1793.2" height="185.8" rx="6.3" stroke-width="6.4"/><polygon fill="#f42a20" stroke="none" points="727.8,566.1 804.6,563.3 802.2,571.6 824.2,557.6 800.3,547.1 803.9,554.9 727.6,563.7"/><polygon fill="#f42a20" stroke="none" points="731.7,609.8 802.4,609.4 799.8,617.7 822.2,604.3 798.6,593.1 802.0,601.1 731.5,607.4"/><polygon fill="#f42a20" stroke="none" points="1393.9,646.0 1474.8,646.3 1472.0,654.5 1494.6,641.4 1471.2,629.9 1474.5,637.9 1393.9,643.6"/></svg>
<div class="ann" style="left:491.6px;top:166.6px;font-size:36px;line-height:50px;height:50px">找到<span style="letter-spacing:1.2px">id</span>为<span style="letter-spacing:1.2px">login-button</span>绑定一个点击事件</div>
<div class="ann" style="left:924.4px;top:281.7px;font-size:36px;line-height:50px;height:50px">取到<span style="letter-spacing:0.45px">id</span>为<span style="letter-spacing:0.45px">username</span>的值（<span style="letter-spacing:0.45px">.var</span>）赋值给变量</div>
<div class="ann" style="left:924.4px;top:325.5px;font-size:36px;line-height:50px;height:50px">取到<span style="letter-spacing:0.5px">id</span>为<span style="letter-spacing:0.5px">password</span>的值（<span style="letter-spacing:0.5px">.var</span>）赋值给变量</div>
<div class="ann" style="left:592.6px;top:426.8px;font-size:36px;line-height:50px;height:50px"><span style="letter-spacing:0.5px">ajax</span>往哪往<span style="letter-spacing:0.5px">/login/</span>提交</div>
<div class="ann" style="left:591.4px;top:477.1px;font-size:36px;line-height:50px;height:50px">类型为<span style="letter-spacing:1.2px">post</span></div>
<div class="ann" style="left:439.2px;top:515.9px;font-size:36px;line-height:50px;height:50px">发送的数据</div>
<div class="ann" style="left:876.8px;top:529.4px;font-size:36px;line-height:50px;height:50px">用户名</div>
<div class="ann" style="left:871.8px;top:583.0px;font-size:36px;line-height:50px;height:50px">密码</div>
</div>
<div style="left:440px;top:153px;width:2079px;height:1px;background:#3c3f41"></div>
<div style="left:440px;top:153px;width:168.6px;height:1px;background:#3c3f41"></div>
<div style="left:608.6px;top:153px;width:192.0px;height:1px;background:#3c3f41"></div>
<div style="left:800.6px;top:153px;width:204.2px;height:1px;background:#3fb0cf"></div>
<div style="left:1004.8px;top:153px;width:223.7px;height:1px;background:#3c3f41"></div>
<div style="left:1228.5px;top:153px;width:205.0px;height:1px;background:#3c3f41"></div>
<div style="left:1433.5px;top:153px;width:207.5px;height:1px;background:#3b3a37"></div>
<div style="left:0;top:1512.5px;width:2560px;height:2.5px;background:#545658"></div>
<div style="left:0;top:1515px;width:2560px;height:85px;background:#3c3f41"></div>
<div style="left:0;top:1557.5px;width:2560px;height:1.3px;background:#47494b"></div>
<svg style="position:absolute;left:64.6px;top:1523.6px" width="30" height="28" viewBox="0 0 30 28" ><g transform="translate(1 1) scale(1.0)"><g stroke="#35383a" stroke-width="2.2" stroke-linejoin="round"><path d="M7.6 .6H13Q16 .6 16 3.6V8Q16 10.9 13 10.9H8.6Q5.6 10.9 5.6 13.9V16H3.6Q.6 16 .6 13V9Q.6 5.6 4 5.6H11V4.7H5.6V3Q5.6 .6 7.6 .6Z"/><path d="M7.6 .6H13Q16 .6 16 3.6V8Q16 10.9 13 10.9H8.6Q5.6 10.9 5.6 13.9V16H3.6Q.6 16 .6 13V9Q.6 5.6 4 5.6H11V4.7H5.6V3Q5.6 .6 7.6 .6Z" transform="rotate(180 11 11)"/></g><path d="M7.6 .6H13Q16 .6 16 3.6V8Q16 10.9 13 10.9H8.6Q5.6 10.9 5.6 13.9V16H3.6Q.6 16 .6 13V9Q.6 5.6 4 5.6H11V4.7H5.6V3Q5.6 .6 7.6 .6Z" fill="#3f9fd6"/><path d="M7.6 .6H13Q16 .6 16 3.6V8Q16 10.9 13 10.9H8.6Q5.6 10.9 5.6 13.9V16H3.6Q.6 16 .6 13V9Q.6 5.6 4 5.6H11V4.7H5.6V3Q5.6 .6 7.6 .6Z" transform="rotate(180 11 11)" fill="#f3c31c"/><circle cx="8.2" cy="3.1" r=".95" fill="#23567a"/><circle cx="13.8" cy="18.9" r=".95" fill="#6e560c"/></g><path d="M15.6 13.4L24.4 20L15.6 26.4" fill="none" stroke="#3c3f41" stroke-width="5.4"/><path d="M15.6 13.8L24.2 20L15.6 26" fill="none" stroke="#b4b6b8" stroke-width="2.6"/></svg><svg style="position:absolute;left:304.2px;top:1524.2px" width="27" height="26" viewBox="0 0 27 26" ><rect x=".9" y=".9" width="24.6" height="23.6" fill="#050505" stroke="#7d8082" stroke-width="1.8"/><rect x="0" y="0" width="26.4" height="4.6" fill="#7d8082"/><path d="M5.4 10.4L11.4 14.4L5.4 18.4" fill="none" stroke="#e6e6e6" stroke-width="1.6"/><path d="M13 19.6H19.6" stroke="#e6e6e6" stroke-width="1.8"/></svg><svg style="position:absolute;left:470.6px;top:1524.2px" width="27" height="28" viewBox="0 0 27 28" ><path d="M.4 .4V25.4L19.6 12.9Z" fill="#37aa4b"/><circle cx="19.8" cy="22.2" r="3.6" fill="#12df12" stroke="#2a4a2c" stroke-width="1.6"/></svg><svg style="position:absolute;left:606.0px;top:1525.0px" width="28" height="27" viewBox="0 0 28 27" ><path d="M6.6 14.4C6.6 8.4 10.6 5.4 16 5.4C22 5.4 26 9 26 14.4Z" fill="#8b8e90"/><rect x="9" y="11.4" width="15" height="10.6" rx="3.6" fill="#f2b277"/><circle cx="13" cy="16" r="1.1" fill="#4a3a2c"/><circle cx="20" cy="16" r="1.1" fill="#4a3a2c"/><path d="M8 26.4C8 22.4 11.6 21.4 16.4 21.4C21.4 21.4 25 22.4 25 26.4Z" fill="#4a9bd8"/><circle cx="6.2" cy="6.2" r="5.8" fill="#f2f2f2"/><path d="M3 4.2H9.4M3 6.2H9.4M3 8.2H9.4" stroke="#55585a" stroke-width="1.1"/></svg><svg style="position:absolute;left:2355.6px;top:1521.6px" width="33" height="30" viewBox="0 0 33 30" ><path d="M15.2 0C23.6 0 30.4 5.6 30.4 12.6C30.4 16.4 28.6 19.6 25.6 22L32 28.6L20.4 24.6C18.8 25 17 25.2 15.2 25.2C6.8 25.2 0 19.6 0 12.6C0 5.6 6.8 0 15.2 0Z" fill="#e9b34f"/></svg><div style="position:absolute;left:2366.2px;top:1523.2px;font:bold 21.5px/24px 'Liberation Sans',sans-serif;color:#2c2c2c;-webkit-text-stroke:0">7</div><svg style="position:absolute;left:10.0px;top:1566.0px" width="29" height="29" viewBox="0 0 29 29" ><rect x="1" y="1" width="26" height="22" fill="#5d6062" stroke="#bdbfc1" stroke-width="1.8"/><path d="M0 27H28" stroke="#bdbfc1" stroke-width="1.6"/></svg><svg style="position:absolute;left:2337.4px;top:1572.6px" width="12" height="16" viewBox="0 0 12 16" ><path d="M0 6.4H11L5.5 0Z" fill="#bdbdbd"/><path d="M0 9.4H11L5.5 15.8Z" fill="#bdbdbd"/></svg><svg style="position:absolute;left:2472.6px;top:1571.6px" width="20" height="19" viewBox="0 0 20 19" ><path d="M2.2 9.6V5.4C2.2 1.4 8.8 1.4 8.8 5.4V7.6" fill="none" stroke="#a9abad" stroke-width="2.2"/><rect x="5.6" y="8.6" width="13.4" height="9.8" rx="1.6" fill="#a9abad"/><path d="M10 11.6H14.6M12.3 11.6V16" stroke="#3c3f41" stroke-width="1.7"/></svg><svg style="position:absolute;left:2519.4px;top:1565.8px" width="26" height="29" viewBox="0 0 26 29" ><g fill="none" stroke="#9a9d9f" stroke-width="1.7"><path d="M5.4 10V3.6C5.4 1.8 7 .9 8.6 .9H17C18.6 .9 20.2 1.8 20.2 3.6V10"/><path d="M.4 10.6H25.4"/><path d="M4.4 11V16.4C4.4 20.4 8 23 12.8 23C17.6 23 21.2 20.4 21.2 16.4V11"/><path d="M8.4 18.6C10 16.6 15.6 16.6 17.2 18.6"/><path d="M7 22L4.4 27.6H10.4L12.8 24L15.2 27.6H21.2L18.6 22"/></g><circle cx="12.8" cy="5.6" r="2.1" fill="#9a9d9f"/><rect x="7.4" y="12.6" width="3.6" height="2" fill="#9a9d9f"/><rect x="14.6" y="12.6" width="3.6" height="2" fill="#9a9d9f"/></svg>
<div class="bb" style="position:absolute;left:101.2px;top:1521.7px;font-size:22.5px;line-height:29px;color:#c3c3c3;font-weight:normal;white-space:pre;">Python Console</div>
<div class="bb" style="position:absolute;left:339.3px;top:1521.7px;font-size:22.5px;line-height:29px;color:#c3c3c3;font-weight:normal;white-space:pre;">Terminal</div>
<div class="bb" style="position:absolute;left:501.5px;top:1521.7px;font-size:22.5px;line-height:29px;color:#c3c3c3;font-weight:normal;white-space:pre;"><span style="text-decoration:underline;text-underline-offset:2.5px;text-decoration-thickness:1.6px">4</span>: Run</div>
<div class="bb" style="position:absolute;left:639.6px;top:1521.7px;font-size:22.5px;line-height:29px;color:#c3c3c3;font-weight:normal;white-space:pre;"><span style="text-decoration:underline;text-underline-offset:2.5px;text-decoration-thickness:1.6px">6</span>: TODO</div>
<div class="bb" style="position:absolute;left:2397.0px;top:1521.8px;font-size:22.3px;line-height:29px;color:#c3c3c3;font-weight:normal;white-space:pre;">Event Log</div>
<div class="bb" style="position:absolute;left:62.5px;top:1564.9px;font-size:22.6px;line-height:29px;color:#bbbbbb;font-weight:normal;white-space:pre;letter-spacing:.28px">use day75 (today <span style="font-size:23.5px">下午</span>4:34)</div>
<div class="bb" style="position:absolute;left:2244.7px;top:1565.5px;font-size:22.0px;line-height:29px;color:#bdbdbd;font-weight:normal;white-space:pre;">44:1</div>
<div class="bb" style="position:absolute;left:2311.0px;top:1565.5px;font-size:22.0px;line-height:29px;color:#bdbdbd;font-weight:normal;white-space:pre;">LF</div>
<div class="bb" style="position:absolute;left:2377.0px;top:1566.1px;font-size:22.6px;line-height:29px;color:#9c9ea0;font-weight:normal;white-space:pre;">UTF-8</div>
</div></body></html>
